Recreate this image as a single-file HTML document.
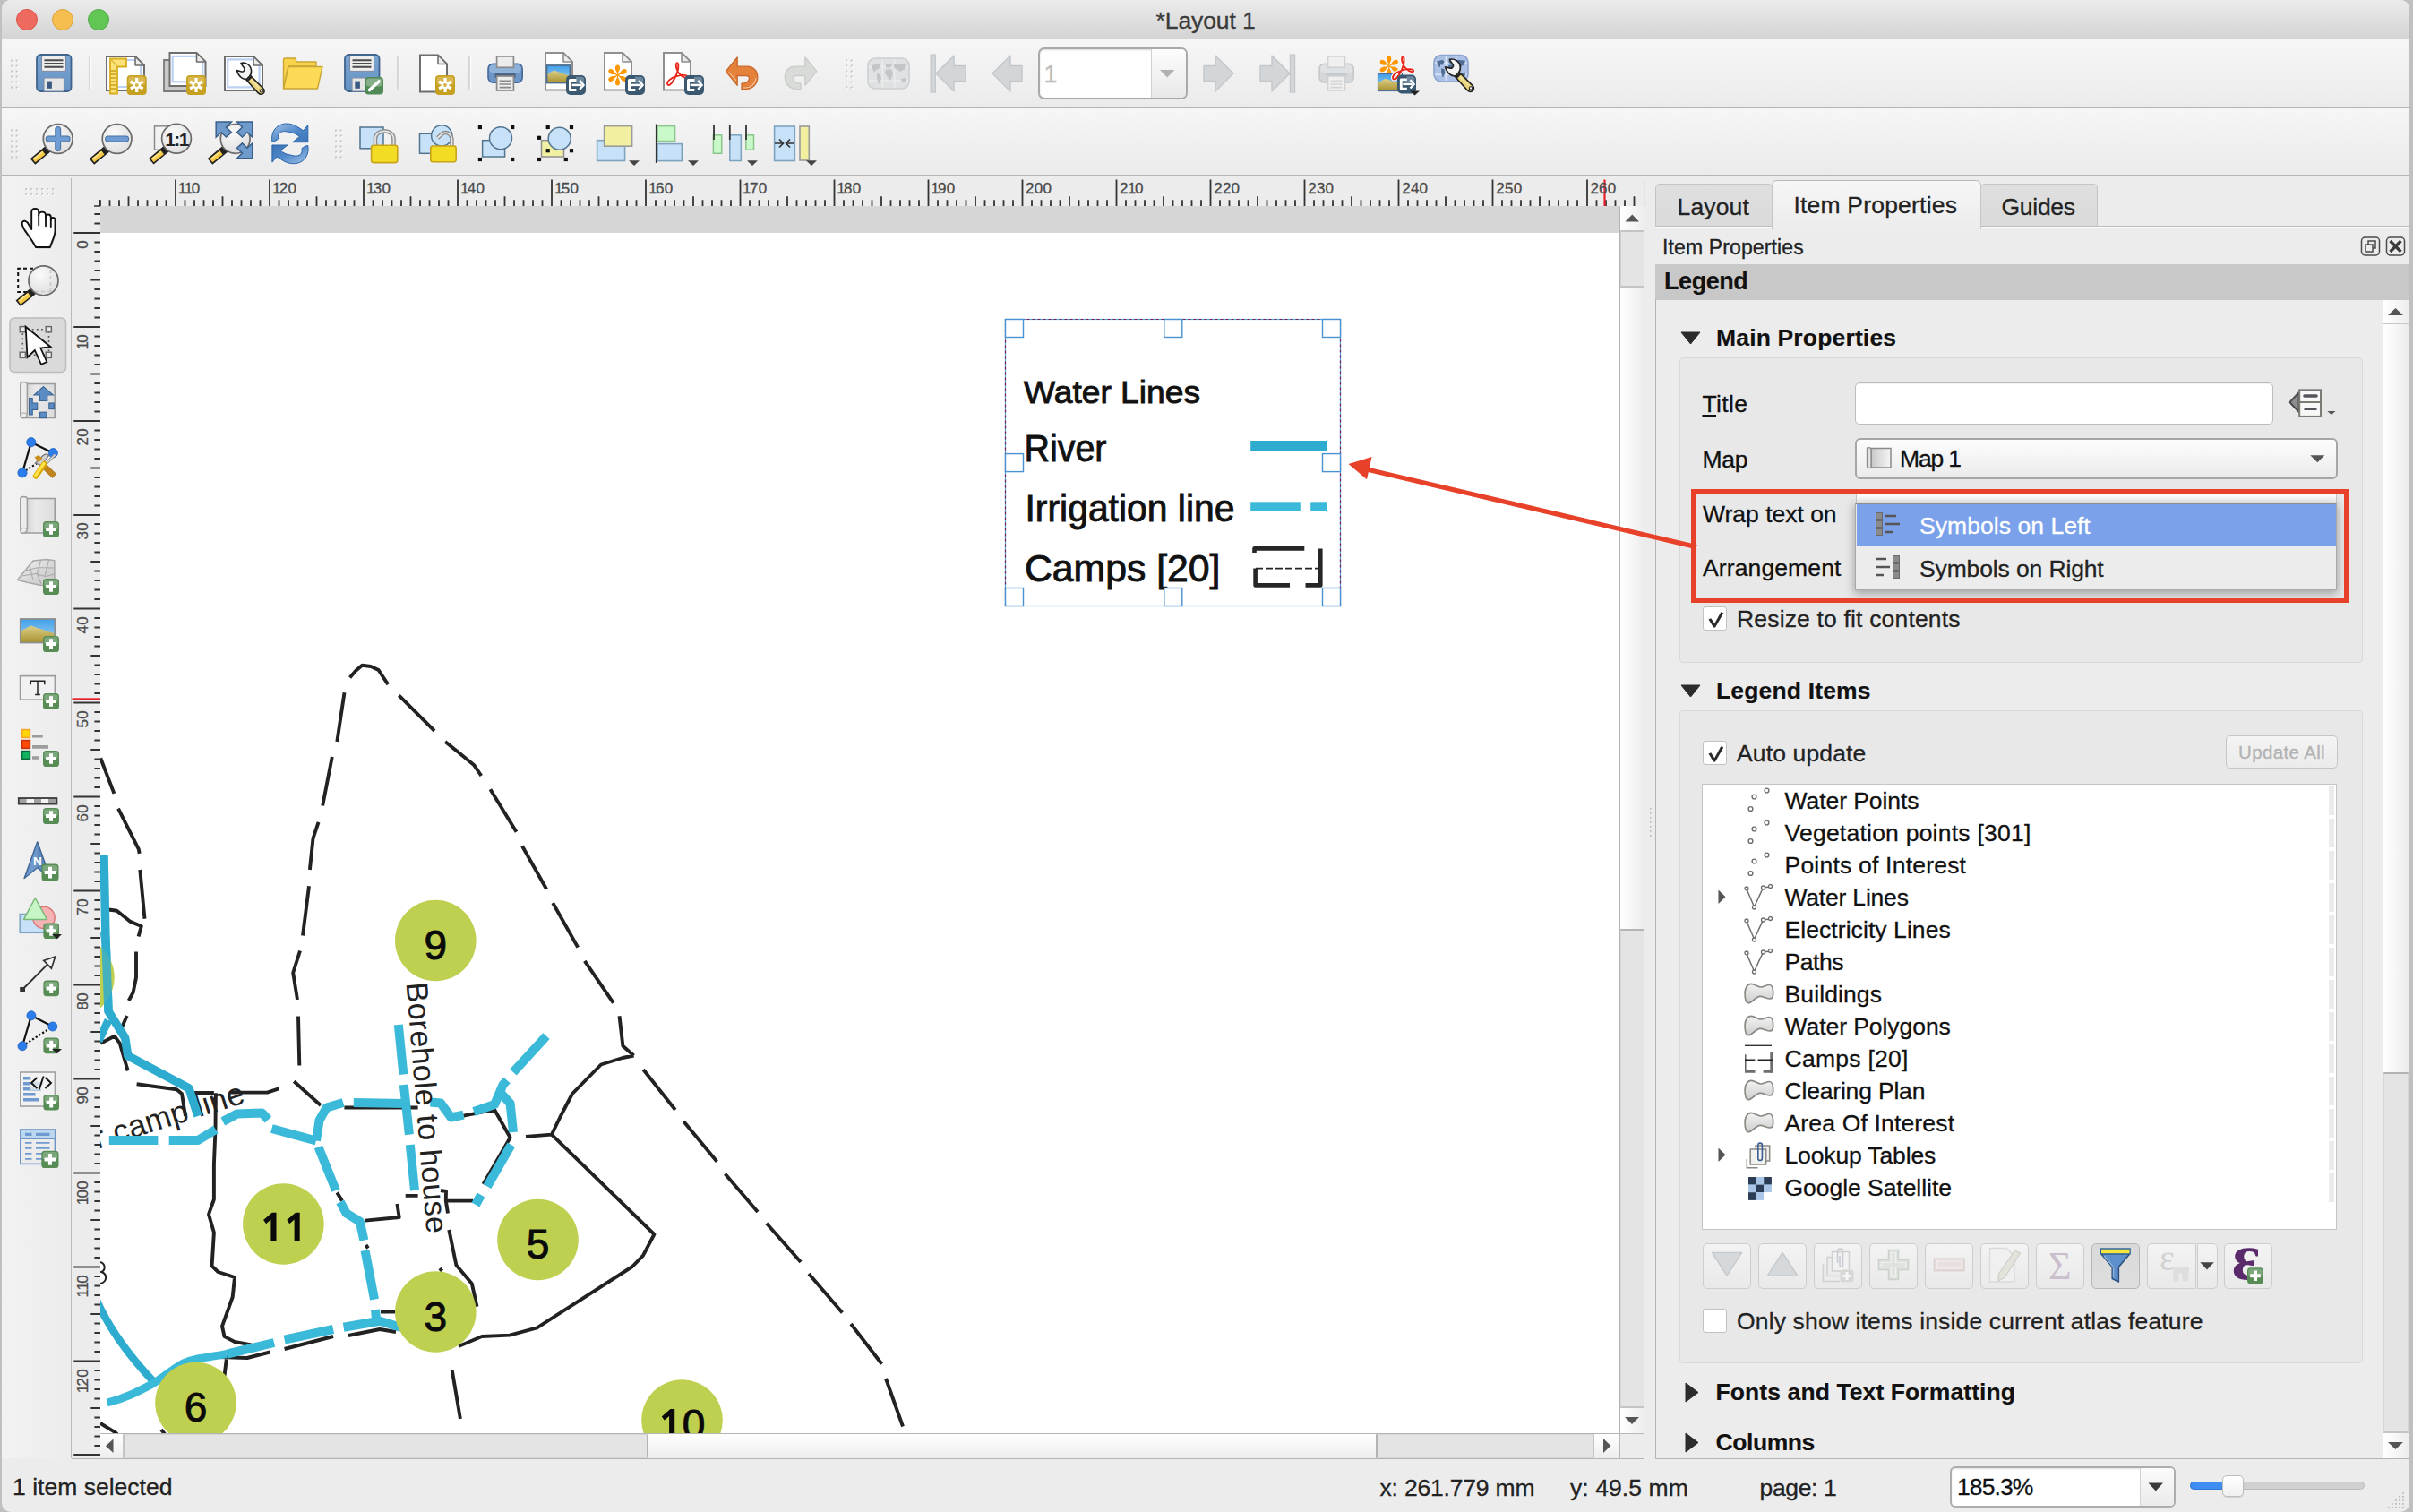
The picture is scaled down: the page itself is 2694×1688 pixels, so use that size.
<!DOCTYPE html><html><head><meta charset="utf-8"><title>*Layout 1</title><style>
*{box-sizing:border-box;margin:0;padding:0}
html,body{width:2694px;height:1688px;overflow:hidden;background:#ececec}
body{font-family:"Liberation Sans",sans-serif;font-size:26.5px;color:#1c1c1c;position:relative}
.a{position:absolute}
.t{position:absolute;white-space:nowrap;line-height:1}
.t{-webkit-text-stroke:0.3px currentColor}
.b{font-weight:bold;-webkit-text-stroke:0.15px currentColor}
svg{position:absolute;overflow:visible}
</style></head><body>
<div class="a" style="left:0px;top:0px;width:2694px;height:1688px;background:#c0c0c0"></div>
<div class="a" style="left:2px;top:0px;width:2688px;height:1688px;background:#ececec;border-radius:10px;overflow:hidden"></div>
<div class="a" style="left:2px;top:0px;width:2688px;height:44px;background:linear-gradient(#ebebeb,#d4d4d4);border-radius:10px 10px 0 0;border-bottom:1px solid #b9b9b9"></div>
<div class="a" style="left:18px;top:10px;width:24px;height:24px;border-radius:50%;background:#ee6a5f;border:1px solid #d95147"></div>
<div class="a" style="left:58px;top:10px;width:24px;height:24px;border-radius:50%;background:#f5be4f;border:1px solid #d9a33d"></div>
<div class="a" style="left:98px;top:10px;width:24px;height:24px;border-radius:50%;background:#62c655;border:1px solid #4fa943"></div>
<div class="t " style="left:1290.5px;top:9.5px;font-size:26.5px;letter-spacing:-0.087px;color:#3a3a3a">*Layout 1</div>
<div class="a" style="left:2px;top:44px;width:2688px;height:77px;background:linear-gradient(#f6f6f6,#ebebeb);border-bottom:2px solid #b4b4b4"></div>
<div class="a" style="left:2px;top:121px;width:2688px;height:76px;background:linear-gradient(#f6f6f6,#ebebeb);border-bottom:2px solid #b4b4b4"></div>
<svg style="left:0;top:0" width="2694" height="200" viewBox="0 0 2694 200">
<rect x="12.0" y="66.5" width="2.2" height="2.2" fill="#c9c9c9"/><rect x="13.6" y="68.1" width="1.4" height="1.4" fill="#fff"/><rect x="17.6" y="66.5" width="2.2" height="2.2" fill="#c9c9c9"/><rect x="19.2" y="68.1" width="1.4" height="1.4" fill="#fff"/><rect x="12.0" y="72.5" width="2.2" height="2.2" fill="#c9c9c9"/><rect x="13.6" y="74.1" width="1.4" height="1.4" fill="#fff"/><rect x="17.6" y="72.5" width="2.2" height="2.2" fill="#c9c9c9"/><rect x="19.2" y="74.1" width="1.4" height="1.4" fill="#fff"/><rect x="12.0" y="78.5" width="2.2" height="2.2" fill="#c9c9c9"/><rect x="13.6" y="80.1" width="1.4" height="1.4" fill="#fff"/><rect x="17.6" y="78.5" width="2.2" height="2.2" fill="#c9c9c9"/><rect x="19.2" y="80.1" width="1.4" height="1.4" fill="#fff"/><rect x="12.0" y="84.5" width="2.2" height="2.2" fill="#c9c9c9"/><rect x="13.6" y="86.1" width="1.4" height="1.4" fill="#fff"/><rect x="17.6" y="84.5" width="2.2" height="2.2" fill="#c9c9c9"/><rect x="19.2" y="86.1" width="1.4" height="1.4" fill="#fff"/><rect x="12.0" y="90.5" width="2.2" height="2.2" fill="#c9c9c9"/><rect x="13.6" y="92.1" width="1.4" height="1.4" fill="#fff"/><rect x="17.6" y="90.5" width="2.2" height="2.2" fill="#c9c9c9"/><rect x="19.2" y="92.1" width="1.4" height="1.4" fill="#fff"/><rect x="12.0" y="96.5" width="2.2" height="2.2" fill="#c9c9c9"/><rect x="13.6" y="98.1" width="1.4" height="1.4" fill="#fff"/><rect x="17.6" y="96.5" width="2.2" height="2.2" fill="#c9c9c9"/><rect x="19.2" y="98.1" width="1.4" height="1.4" fill="#fff"/>
<g transform="translate(40,60)" ><defs><linearGradient id="flp" x1="0" y1="0" x2="0" y2="1"><stop offset="0" stop-color="#7ba5d2"/><stop offset="1" stop-color="#6592c2"/></linearGradient></defs><rect x="1" y="1" width="38.5" height="41" rx="4.5" fill="url(#flp)" stroke="#3f638d" stroke-width="1.8"/><rect x="6.5" y="2.4" width="27" height="17" rx="1.5" fill="#ececec" stroke="#7a8aa0" stroke-width="1"/><path d="M9.5 7.2H30.5M9.5 11H30.5M9.5 14.8H30.5" stroke="#4a4a4a" stroke-width="1.9"/><rect x="9" y="27" width="22.5" height="15" rx="1" fill="#e6e6e6" stroke="#7d8ea6" stroke-width="1.2"/><rect x="12.3" y="30.6" width="5.6" height="8.2" fill="#3a5a82"/></g>
<path d="M100 62.5V101" stroke="#cfcfcf" stroke-width="1.6"/><path d="M101.6 62.5V101" stroke="#fbfbfb" stroke-width="1.4"/>
<g transform="translate(118,62)" ><path d="M1 1H33L43 11V39H1Z" fill="#fff" stroke="#6e6e6e" stroke-width="2" stroke-linejoin="miter"/><path d="M22 5H36M39.2 9V24M13.9 35H26" fill="none" stroke="#bcd0f4" stroke-width="2.2"/><path d="M33 1V11H43Z" fill="#ececec" stroke="#6e6e6e" stroke-width="1.6" stroke-linejoin="bevel"/><path d="M5 3.5H23V12.5H13V42.5H5Z" fill="#fde27a" stroke="#d9ae1c" stroke-width="1.8"/><path d="M5.5 4L12.5 11.5" stroke="#e0b93a" stroke-width="1.3"/><path d="M5.5 17H11M5.5 21H11M5.5 25H11M5.5 29H11M5.5 33H11M5.5 37H11" stroke="#c99f16" stroke-width="1.7"/></g>
<g transform="translate(141.7,84)" ><rect x="0" y="0" width="22" height="22" rx="4" fill="#c6a11f"/><rect x="1.6" y="1.6" width="18.8" height="9.4" rx="3" fill="#d6b84e"/><path d="M11.00 3.00L11.00 19.00M17.93 7.00L4.07 15.00M17.93 15.00L4.07 7.00" stroke="#fff" stroke-width="3.2" stroke-linecap="butt"/><circle cx="11.0" cy="11.0" r="4.3" fill="#fff"/><circle cx="11.0" cy="11.0" r="2" fill="#d2b347"/></g>
<g transform="translate(182,58)" ><path d="M1 9H8V38H31V44H1Z" fill="#c9c9c9" stroke="#7b7b7b" stroke-width="1.8"/><g transform="translate(6.5,0)" ><path d="M1 1H31L41 11V38H1Z" fill="#fff" stroke="#6e6e6e" stroke-width="2" stroke-linejoin="miter"/><path d="M31 4.8H4.2V33.4H37.8V11" fill="none" stroke="#bcd0f4" stroke-width="2.2"/><path d="M31 1V11H41Z" fill="#ececec" stroke="#6e6e6e" stroke-width="1.6" stroke-linejoin="bevel"/></g></g>
<g transform="translate(208,84)" ><rect x="0" y="0" width="22" height="22" rx="4" fill="#c6a11f"/><rect x="1.6" y="1.6" width="18.8" height="9.4" rx="3" fill="#d6b84e"/><path d="M11.00 3.00L11.00 19.00M17.93 7.00L4.07 15.00M17.93 15.00L4.07 7.00" stroke="#fff" stroke-width="3.2" stroke-linecap="butt"/><circle cx="11.0" cy="11.0" r="4.3" fill="#fff"/><circle cx="11.0" cy="11.0" r="2" fill="#d2b347"/></g>
<g transform="translate(250,62)" ><path d="M1 1H33L43 11V39H1Z" fill="#fff" stroke="#6e6e6e" stroke-width="2" stroke-linejoin="miter"/><path d="M33 4.4H4.2V35.4H39.6V11" fill="none" stroke="#bcd0f4" stroke-width="2.2"/><path d="M33 1V11H43Z" fill="#ececec" stroke="#6e6e6e" stroke-width="1.6" stroke-linejoin="bevel"/></g>
<g transform="translate(262.5,68.9)" ><g transform="scale(0.95)"><path d="M12.6 20.6L17.4 15.8L33 31.4C35 33.4 34.6 36.4 32.6 37.6C30.6 38.8 28.4 38 27 36.6Z" fill="#e8d27a" stroke="#222" stroke-width="1.7" stroke-linejoin="round"/><path d="M28 30.5L18.5 21" stroke="#f4e6a4" stroke-width="1.6"/><path d="M6.8 1.7C12 0.2 18.4 3.6 19 10.4C19.3 13.4 18.2 15.8 16.8 17.2L13.8 20.2C10.6 20.8 4.6 19.4 2 10.2L7.6 11.6C9.2 12 10.7 11 11 9.4C11.3 8 10.4 6.6 9.4 5.8Z" fill="#f3f3f3" stroke="#222" stroke-width="1.7" stroke-linejoin="round"/><path d="M14.4 22.4L19.2 17.6" stroke="#222" stroke-width="2.6"/><circle cx="30.9" cy="34.2" r="1.7" fill="#f6f6f6" stroke="#222" stroke-width="1.1"/></g></g>
<g transform="translate(315,64)" ><path d="M1.5 34.5V2.5C1.5 1.5 2 1 3 1H15L16 5H38V10H7L1.5 34.5Z" fill="#f7d24a" stroke="#c9a536" stroke-width="1.4" stroke-linejoin="round"/><path d="M7 10.5H45L39.5 35H1.5Z" fill="#fcda55" stroke="#c9a536" stroke-width="1.4" stroke-linejoin="round"/></g>
<g transform="translate(384,60)" ><defs><linearGradient id="flp" x1="0" y1="0" x2="0" y2="1"><stop offset="0" stop-color="#7ba5d2"/><stop offset="1" stop-color="#6592c2"/></linearGradient></defs><rect x="1" y="1" width="38.5" height="41" rx="4.5" fill="url(#flp)" stroke="#3f638d" stroke-width="1.8"/><rect x="6.5" y="2.4" width="27" height="17" rx="1.5" fill="#ececec" stroke="#7a8aa0" stroke-width="1"/><path d="M9.5 7.2H30.5M9.5 11H30.5M9.5 14.8H30.5" stroke="#4a4a4a" stroke-width="1.9"/><rect x="9" y="27" width="22.5" height="15" rx="1" fill="#e6e6e6" stroke="#7d8ea6" stroke-width="1.2"/><rect x="12.3" y="30.6" width="5.6" height="8.2" fill="#3a5a82"/></g>
<g transform="translate(407.5,86)" ><rect x="0" y="0" width="20.5" height="19.5" rx="4" fill="#4f8a55"/><rect x="1.4" y="1.4" width="17.7" height="9" rx="3" fill="#8eb392" opacity="0.85"/><path d="M5 14.5L15.5 5" stroke="#fff" stroke-width="3.6" stroke-linecap="round"/></g>
<path d="M444 62.5V101" stroke="#cfcfcf" stroke-width="1.6"/><path d="M445.6 62.5V101" stroke="#fbfbfb" stroke-width="1.4"/>
<g transform="translate(468,60.5)" ><path d="M1 1H21L31 11V42H1Z" fill="#fff" stroke="#6e6e6e" stroke-width="2" stroke-linejoin="miter"/><path d="M21 1V11H31Z" fill="#ececec" stroke="#6e6e6e" stroke-width="1.6" stroke-linejoin="bevel"/></g>
<g transform="translate(486,84)" ><rect x="0" y="0" width="22" height="22" rx="4" fill="#c6a11f"/><rect x="1.6" y="1.6" width="18.8" height="9.4" rx="3" fill="#d6b84e"/><path d="M11.00 3.00L11.00 19.00M17.93 7.00L4.07 15.00M17.93 15.00L4.07 7.00" stroke="#fff" stroke-width="3.2" stroke-linecap="butt"/><circle cx="11.0" cy="11.0" r="4.3" fill="#fff"/><circle cx="11.0" cy="11.0" r="2" fill="#d2b347"/></g>
<path d="M524 62.5V101" stroke="#cfcfcf" stroke-width="1.6"/><path d="M525.6 62.5V101" stroke="#fbfbfb" stroke-width="1.4"/>
<g transform="translate(544,62)" ><rect x="1" y="9.3" width="38.2" height="20.8" rx="5.5" fill="#6c95c8" stroke="#466a98" stroke-width="1.6"/><rect x="2.4" y="10.6" width="35.4" height="8.6" rx="4" fill="#90b1d9"/><rect x="10.6" y="0.9" width="18.8" height="12.4" fill="#ececec" stroke="#8a8a8a" stroke-width="1.7"/><rect x="8.6" y="20.2" width="22.8" height="4.6" fill="#4a5f7e"/><rect x="10.6" y="23" width="18.8" height="16" fill="#ececec" stroke="#8a8a8a" stroke-width="1.7"/><path d="M13.6 28.3H26.4M13.6 32H26.4M13.6 35.7H26.4" stroke="#8a8a8a" stroke-width="1.7"/></g>
<g transform="translate(608,58)" ><path d="M1 1H21L31 11V42.5H1Z" fill="#fff" stroke="#8f8f8f" stroke-width="2" stroke-linejoin="miter"/><path d="M21 1V11H31Z" fill="#ececec" stroke="#8f8f8f" stroke-width="1.6" stroke-linejoin="bevel"/><g transform="translate(2.5,15)" ><defs><linearGradient id="sky" x1="0" y1="0" x2="0" y2="1"><stop offset="0" stop-color="#3f9fe8"/><stop offset="1" stop-color="#a9d6f5"/></linearGradient><linearGradient id="snd" x1="0" y1="0" x2="0" y2="1"><stop offset="0" stop-color="#ddd08a"/><stop offset="1" stop-color="#a8922e"/></linearGradient></defs><rect x="0" y="0" width="26" height="19.5" fill="url(#sky)"/><path d="M0 10.14L7.8 5.460000000000001L26 12.09V19.5H0Z" fill="url(#snd)"/></g><rect x="2.5" y="15" width="26" height="19.5" fill="none" stroke="#4f6f90" stroke-width="1.8"/></g>
<g transform="translate(632,84)" ><g transform="scale(1.0)"><rect x="0" y="0" width="22" height="22" rx="5" fill="#3a5870"/><path d="M11 1.8H17.2C19 1.8 20.2 3 20.2 4.8V8.6H11Z" fill="#7a94a8" opacity="0.8"/><path d="M11.4 5.6H4.5V16.5H11.4" fill="none" stroke="#fff" stroke-width="3" stroke-linejoin="round"/><path d="M6.6 10.9H17.4" stroke="#fff" stroke-width="2.5"/><path d="M15.2 5.9L19.6 10.9L15.2 15.8" fill="none" stroke="#fff" stroke-width="2.4"/></g></g>
<g transform="translate(674,58)" ><path d="M1 1H21L31 11V42.5H1Z" fill="#fff" stroke="#8f8f8f" stroke-width="2" stroke-linejoin="miter"/><path d="M21 1V11H31Z" fill="#ececec" stroke="#8f8f8f" stroke-width="1.6" stroke-linejoin="bevel"/><path transform="translate(15.5,26) rotate(0)" d="M0 1.8L-0.87 -3.48C-3.38 -6.76 -3.09 -11.50 0 -11.50C3.09 -11.50 3.38 -6.76 0.87 -3.48Z" fill="#ff9700"/><path transform="translate(15.5,26) rotate(60)" d="M0 1.8L-0.87 -3.48C-3.38 -6.76 -3.09 -11.50 0 -11.50C3.09 -11.50 3.38 -6.76 0.87 -3.48Z" fill="#ff9700"/><path transform="translate(15.5,26) rotate(120)" d="M0 1.8L-0.87 -3.48C-3.38 -6.76 -3.09 -11.50 0 -11.50C3.09 -11.50 3.38 -6.76 0.87 -3.48Z" fill="#ff9700"/><path transform="translate(15.5,26) rotate(180)" d="M0 1.8L-0.87 -3.48C-3.38 -6.76 -3.09 -11.50 0 -11.50C3.09 -11.50 3.38 -6.76 0.87 -3.48Z" fill="#ff9700"/><path transform="translate(15.5,26) rotate(240)" d="M0 1.8L-0.87 -3.48C-3.38 -6.76 -3.09 -11.50 0 -11.50C3.09 -11.50 3.38 -6.76 0.87 -3.48Z" fill="#ff9700"/><path transform="translate(15.5,26) rotate(300)" d="M0 1.8L-0.87 -3.48C-3.38 -6.76 -3.09 -11.50 0 -11.50C3.09 -11.50 3.38 -6.76 0.87 -3.48Z" fill="#ff9700"/></g>
<g transform="translate(698,84)" ><g transform="scale(1.0)"><rect x="0" y="0" width="22" height="22" rx="5" fill="#3a5870"/><path d="M11 1.8H17.2C19 1.8 20.2 3 20.2 4.8V8.6H11Z" fill="#7a94a8" opacity="0.8"/><path d="M11.4 5.6H4.5V16.5H11.4" fill="none" stroke="#fff" stroke-width="3" stroke-linejoin="round"/><path d="M6.6 10.9H17.4" stroke="#fff" stroke-width="2.5"/><path d="M15.2 5.9L19.6 10.9L15.2 15.8" fill="none" stroke="#fff" stroke-width="2.4"/></g></g>
<g transform="translate(740,58)" ><path d="M1 1H21L31 11V42.5H1Z" fill="#fff" stroke="#8f8f8f" stroke-width="2" stroke-linejoin="miter"/><path d="M21 1V11H31Z" fill="#ececec" stroke="#8f8f8f" stroke-width="1.6" stroke-linejoin="bevel"/></g>
<g transform="translate(742.5,67.5) scale(1.0)"><path d="M3 27C1 24 6 19.5 13 17.5C19 15.7 24.5 16 25 18.2C25.4 20 21 19.6 17 16C12.5 12 11.5 4.5 13 3C14.6 1.6 15.6 6 14 12C12.5 18 6 30 3 27Z" fill="none" stroke="#e8261a" stroke-width="1.9" stroke-linejoin="round"/></g>
<g transform="translate(764,84)" ><g transform="scale(1.0)"><rect x="0" y="0" width="22" height="22" rx="5" fill="#3a5870"/><path d="M11 1.8H17.2C19 1.8 20.2 3 20.2 4.8V8.6H11Z" fill="#7a94a8" opacity="0.8"/><path d="M11.4 5.6H4.5V16.5H11.4" fill="none" stroke="#fff" stroke-width="3" stroke-linejoin="round"/><path d="M6.6 10.9H17.4" stroke="#fff" stroke-width="2.5"/><path d="M15.2 5.9L19.6 10.9L15.2 15.8" fill="none" stroke="#fff" stroke-width="2.4"/></g></g>
<path d="M810.3 79.6L823.2 64V74.2H834C841 74.2 845.8 79 845.8 86C845.8 94 840 99.6 832 99.6H828V93.1C833 93.1 836.5 90.5 836.5 87.5C836.5 85.5 835 84.5 833 84.5H823.2V95.3Z" fill="#e4813a" stroke="#c9682a" stroke-width="1.3" stroke-linejoin="round"/>
<path d="M813.5 80.5L822 90M829.5 98H832C838.5 98 843.5 93.5 844 87" fill="none" stroke="#f6c49c" stroke-width="1.1"/>
<path transform="translate(1722.1,0) scale(-1,1)" d="M810.3 79.6L823.2 64V74.2H834C841 74.2 845.8 79 845.8 86C845.8 94 840 99.6 832 99.6H828V93.1C833 93.1 836.5 90.5 836.5 87.5C836.5 85.5 835 84.5 833 84.5H823.2V95.3Z" fill="#d8dbd8" stroke="#c9ccc9" stroke-width="1.3" stroke-linejoin="round"/>
<rect x="944.0" y="66.5" width="2.2" height="2.2" fill="#c9c9c9"/><rect x="945.6" y="68.1" width="1.4" height="1.4" fill="#fff"/><rect x="949.6" y="66.5" width="2.2" height="2.2" fill="#c9c9c9"/><rect x="951.2" y="68.1" width="1.4" height="1.4" fill="#fff"/><rect x="944.0" y="72.5" width="2.2" height="2.2" fill="#c9c9c9"/><rect x="945.6" y="74.1" width="1.4" height="1.4" fill="#fff"/><rect x="949.6" y="72.5" width="2.2" height="2.2" fill="#c9c9c9"/><rect x="951.2" y="74.1" width="1.4" height="1.4" fill="#fff"/><rect x="944.0" y="78.5" width="2.2" height="2.2" fill="#c9c9c9"/><rect x="945.6" y="80.1" width="1.4" height="1.4" fill="#fff"/><rect x="949.6" y="78.5" width="2.2" height="2.2" fill="#c9c9c9"/><rect x="951.2" y="80.1" width="1.4" height="1.4" fill="#fff"/><rect x="944.0" y="84.5" width="2.2" height="2.2" fill="#c9c9c9"/><rect x="945.6" y="86.1" width="1.4" height="1.4" fill="#fff"/><rect x="949.6" y="84.5" width="2.2" height="2.2" fill="#c9c9c9"/><rect x="951.2" y="86.1" width="1.4" height="1.4" fill="#fff"/><rect x="944.0" y="90.5" width="2.2" height="2.2" fill="#c9c9c9"/><rect x="945.6" y="92.1" width="1.4" height="1.4" fill="#fff"/><rect x="949.6" y="90.5" width="2.2" height="2.2" fill="#c9c9c9"/><rect x="951.2" y="92.1" width="1.4" height="1.4" fill="#fff"/><rect x="944.0" y="96.5" width="2.2" height="2.2" fill="#c9c9c9"/><rect x="945.6" y="98.1" width="1.4" height="1.4" fill="#fff"/><rect x="949.6" y="96.5" width="2.2" height="2.2" fill="#c9c9c9"/><rect x="951.2" y="98.1" width="1.4" height="1.4" fill="#fff"/>
<g transform="translate(968,64)" ><rect x="1" y="1" width="46" height="34" rx="8" fill="#dfe1e3" stroke="#cdd0d2" stroke-width="1.6"/><path d="M17.28 2V34M30.72 2V34M2 10.799999999999999H46M2 25.919999999999998H46" stroke="#ececec" stroke-width="1.5"/><g fill="#c3c6c9" transform="scale(1.000,1.000)"><path d="M5 9L13 7L15 10L12 14L10 13L9 17L6 13Z"/><path d="M11 18L15 19L16 24L13 30L11 24Z"/><path d="M21 8L27 7L28 10L24 12L21 11Z"/><path d="M21 14L27 13L29 18L26 26L23 22L20 17Z"/><path d="M30 7L43 8L42 13L37 16L33 13L30 12Z"/><path d="M38 24L43 23L43 27L39 28Z"/></g></g>
<g transform="translate(1038.5,61)" ><rect x="0.6" y="0" width="5.2" height="42" fill="#d3d6d9" stroke="#c4c7ca" stroke-width="1.2"/><g transform="translate(5.6,0)" ><path d="M1 21L21 1V12.5H34V29.5H21V41Z" fill="#d3d6d9" stroke="#c4c7ca" stroke-width="1.4" stroke-linejoin="round"/></g></g>
<g transform="translate(1107,61)" ><path d="M1 21L21 1V12.5H34V29.5H21V41Z" fill="#d3d6d9" stroke="#c4c7ca" stroke-width="1.4" stroke-linejoin="round"/></g>
<g transform="translate(1343,61)" ><path d="M34 21L14 1V12.5H1V29.5H14V41Z" fill="#d3d6d9" stroke="#c4c7ca" stroke-width="1.4" stroke-linejoin="round"/></g>
<g transform="translate(1406,61)" ><path d="M34 21L14 1V12.5H1V29.5H14V41Z" fill="#d3d6d9" stroke="#c4c7ca" stroke-width="1.4" stroke-linejoin="round"/><rect x="34.4" y="0" width="5.2" height="42" fill="#d3d6d9" stroke="#c4c7ca" stroke-width="1.2"/></g>
<g transform="translate(1472,62)" ><rect x="1" y="9.3" width="38.2" height="20.8" rx="5.5" fill="#d5d8db" stroke="#c6c9cc" stroke-width="1.6"/><rect x="2.4" y="10.6" width="35.4" height="8.6" rx="4" fill="#dfe2e5"/><rect x="10.6" y="0.9" width="18.8" height="12.4" fill="#f0f0f0" stroke="#d2d2d2" stroke-width="1.7"/><rect x="8.6" y="20.2" width="22.8" height="4.6" fill="#c4c7ca"/><rect x="10.6" y="23" width="18.8" height="16" fill="#f0f0f0" stroke="#d2d2d2" stroke-width="1.7"/><path d="M13.6 28.3H26.4M13.6 32H26.4M13.6 35.7H26.4" stroke="#d4d4d4" stroke-width="1.7"/></g>
<path transform="translate(1550.8,73.6) rotate(0)" d="M0 1.8L-0.86 -3.45C-3.35 -6.71 -3.07 -11.40 0 -11.40C3.07 -11.40 3.35 -6.71 0.86 -3.45Z" fill="#ff9700"/><path transform="translate(1550.8,73.6) rotate(60)" d="M0 1.8L-0.86 -3.45C-3.35 -6.71 -3.07 -11.40 0 -11.40C3.07 -11.40 3.35 -6.71 0.86 -3.45Z" fill="#ff9700"/><path transform="translate(1550.8,73.6) rotate(120)" d="M0 1.8L-0.86 -3.45C-3.35 -6.71 -3.07 -11.40 0 -11.40C3.07 -11.40 3.35 -6.71 0.86 -3.45Z" fill="#ff9700"/><path transform="translate(1550.8,73.6) rotate(180)" d="M0 1.8L-0.86 -3.45C-3.35 -6.71 -3.07 -11.40 0 -11.40C3.07 -11.40 3.35 -6.71 0.86 -3.45Z" fill="#ff9700"/><path transform="translate(1550.8,73.6) rotate(240)" d="M0 1.8L-0.86 -3.45C-3.35 -6.71 -3.07 -11.40 0 -11.40C3.07 -11.40 3.35 -6.71 0.86 -3.45Z" fill="#ff9700"/><path transform="translate(1550.8,73.6) rotate(300)" d="M0 1.8L-0.86 -3.45C-3.35 -6.71 -3.07 -11.40 0 -11.40C3.07 -11.40 3.35 -6.71 0.86 -3.45Z" fill="#ff9700"/>
<g transform="translate(1538.5,82.5)" ><defs><linearGradient id="sky" x1="0" y1="0" x2="0" y2="1"><stop offset="0" stop-color="#3f9fe8"/><stop offset="1" stop-color="#a9d6f5"/></linearGradient><linearGradient id="snd" x1="0" y1="0" x2="0" y2="1"><stop offset="0" stop-color="#ddd08a"/><stop offset="1" stop-color="#a8922e"/></linearGradient></defs><rect x="0" y="0" width="27" height="19" fill="url(#sky)"/><path d="M0 9.88L8.1 5.32L27 11.78V19H0Z" fill="url(#snd)"/><rect x="0" y="0" width="27" height="19" fill="none" stroke="#4f6f96" stroke-width="1.2"/></g>
<g transform="translate(1552.4,60.3) scale(1.03)"><path d="M3 27C1 24 6 19.5 13 17.5C19 15.7 24.5 16 25 18.2C25.4 20 21 19.6 17 16C12.5 12 11.5 4.5 13 3C14.6 1.6 15.6 6 14 12C12.5 18 6 30 3 27Z" fill="none" stroke="#ffffff" stroke-width="4" stroke-linejoin="round"/></g>
<g transform="translate(1552.4,60.3) scale(1.03)"><path d="M3 27C1 24 6 19.5 13 17.5C19 15.7 24.5 16 25 18.2C25.4 20 21 19.6 17 16C12.5 12 11.5 4.5 13 3C14.6 1.6 15.6 6 14 12C12.5 18 6 30 3 27Z" fill="none" stroke="#e8261a" stroke-width="1.9" stroke-linejoin="round"/></g>
<g transform="translate(1560,83.5)" ><g transform="scale(0.9545454545454546)"><rect x="0" y="0" width="22" height="22" rx="5" fill="#3a5870"/><path d="M11 1.8H17.2C19 1.8 20.2 3 20.2 4.8V8.6H11Z" fill="#7a94a8" opacity="0.8"/><path d="M11.4 5.6H4.5V16.5H11.4" fill="none" stroke="#fff" stroke-width="3" stroke-linejoin="round"/><path d="M6.6 10.9H17.4" stroke="#fff" stroke-width="2.5"/><path d="M15.2 5.9L19.6 10.9L15.2 15.8" fill="none" stroke="#fff" stroke-width="2.4"/></g></g>
<path d="M1574 101.5H1585L1579.5 106.5Z" fill="#222"/>
<g transform="translate(1600,60.5)" ><rect x="1" y="1" width="38" height="29.5" rx="8" fill="#abc2e6" stroke="#8aa4cf" stroke-width="1.6"/><path d="M14.399999999999999 2V29.5M25.6 2V29.5M2 9.45H38M2 22.68H38" stroke="#dbe5f6" stroke-width="1.5"/><g fill="#4f6d92" transform="scale(0.833,0.875)"><path d="M5 9L13 7L15 10L12 14L10 13L9 17L6 13Z"/><path d="M11 18L15 19L16 24L13 30L11 24Z"/><path d="M21 8L27 7L28 10L24 12L21 11Z"/><path d="M21 14L27 13L29 18L26 26L23 22L20 17Z"/><path d="M30 7L43 8L42 13L37 16L33 13L30 12Z"/><path d="M38 24L43 23L43 27L39 28Z"/></g></g>
<g transform="translate(1611.6,64.7)" ><g transform="scale(0.985)"><path d="M12.6 20.6L17.4 15.8L33 31.4C35 33.4 34.6 36.4 32.6 37.6C30.6 38.8 28.4 38 27 36.6Z" fill="#e8d27a" stroke="#222" stroke-width="1.7" stroke-linejoin="round"/><path d="M28 30.5L18.5 21" stroke="#f4e6a4" stroke-width="1.6"/><path d="M6.8 1.7C12 0.2 18.4 3.6 19 10.4C19.3 13.4 18.2 15.8 16.8 17.2L13.8 20.2C10.6 20.8 4.6 19.4 2 10.2L7.6 11.6C9.2 12 10.7 11 11 9.4C11.3 8 10.4 6.6 9.4 5.8Z" fill="#f3f3f3" stroke="#222" stroke-width="1.7" stroke-linejoin="round"/><path d="M14.4 22.4L19.2 17.6" stroke="#222" stroke-width="2.6"/><circle cx="30.9" cy="34.2" r="1.7" fill="#f6f6f6" stroke="#222" stroke-width="1.1"/></g></g>
<rect x="12.0" y="144.5" width="2.2" height="2.2" fill="#c9c9c9"/><rect x="13.6" y="146.1" width="1.4" height="1.4" fill="#fff"/><rect x="17.6" y="144.5" width="2.2" height="2.2" fill="#c9c9c9"/><rect x="19.2" y="146.1" width="1.4" height="1.4" fill="#fff"/><rect x="12.0" y="150.5" width="2.2" height="2.2" fill="#c9c9c9"/><rect x="13.6" y="152.1" width="1.4" height="1.4" fill="#fff"/><rect x="17.6" y="150.5" width="2.2" height="2.2" fill="#c9c9c9"/><rect x="19.2" y="152.1" width="1.4" height="1.4" fill="#fff"/><rect x="12.0" y="156.5" width="2.2" height="2.2" fill="#c9c9c9"/><rect x="13.6" y="158.1" width="1.4" height="1.4" fill="#fff"/><rect x="17.6" y="156.5" width="2.2" height="2.2" fill="#c9c9c9"/><rect x="19.2" y="158.1" width="1.4" height="1.4" fill="#fff"/><rect x="12.0" y="162.5" width="2.2" height="2.2" fill="#c9c9c9"/><rect x="13.6" y="164.1" width="1.4" height="1.4" fill="#fff"/><rect x="17.6" y="162.5" width="2.2" height="2.2" fill="#c9c9c9"/><rect x="19.2" y="164.1" width="1.4" height="1.4" fill="#fff"/><rect x="12.0" y="168.5" width="2.2" height="2.2" fill="#c9c9c9"/><rect x="13.6" y="170.1" width="1.4" height="1.4" fill="#fff"/><rect x="17.6" y="168.5" width="2.2" height="2.2" fill="#c9c9c9"/><rect x="19.2" y="170.1" width="1.4" height="1.4" fill="#fff"/><rect x="12.0" y="174.5" width="2.2" height="2.2" fill="#c9c9c9"/><rect x="13.6" y="176.1" width="1.4" height="1.4" fill="#fff"/><rect x="17.6" y="174.5" width="2.2" height="2.2" fill="#c9c9c9"/><rect x="19.2" y="176.1" width="1.4" height="1.4" fill="#fff"/>
<path d="M54.5 165.5L36.5 180.5" stroke="#222" stroke-width="8.6" stroke-linecap="butt"/><path d="M49.0 170.5L37.7 179.3" stroke="#f6c945" stroke-width="5.2" stroke-linecap="butt"/><path d="M47.5 169.7L38.1 177.2" stroke="#fbe58c" stroke-width="1.6"/><defs><radialGradient id="lens64" cx="0.4" cy="0.3" r="0.8"><stop offset="0" stop-color="#fafafa"/><stop offset="1" stop-color="#dcdcdc"/></radialGradient></defs><circle cx="64.7" cy="155" r="16.4" fill="url(#lens64)" stroke="#6b6b6b" stroke-width="1.7"/><path d="M54.2 155H75.2M64.7 144.5V165.5" stroke="#49709f" stroke-width="7" stroke-linecap="round"/><path d="M54.2 155H75.2M64.7 144.5V165.5" stroke="#6e9cd3" stroke-width="5" stroke-linecap="round"/>
<path d="M120.4 165.5L102.4 180.5" stroke="#222" stroke-width="8.6" stroke-linecap="butt"/><path d="M114.9 170.5L103.6 179.3" stroke="#f6c945" stroke-width="5.2" stroke-linecap="butt"/><path d="M113.4 169.7L104.0 177.2" stroke="#fbe58c" stroke-width="1.6"/><defs><radialGradient id="lens130" cx="0.4" cy="0.3" r="0.8"><stop offset="0" stop-color="#fafafa"/><stop offset="1" stop-color="#dcdcdc"/></radialGradient></defs><circle cx="130.6" cy="155" r="16.4" fill="url(#lens130)" stroke="#6b6b6b" stroke-width="1.7"/><path d="M120.6 155H140.6" stroke="#49709f" stroke-width="7" stroke-linecap="round"/><path d="M120.6 155H140.6" stroke="#6e9cd3" stroke-width="5" stroke-linecap="round"/>
<rect x="172.5" y="140.8" width="27" height="26.5" fill="#f2f2f2" stroke="#8a8a8a" stroke-width="1.5"/>
<path d="M186.8 165.3L168.8 180.3" stroke="#222" stroke-width="8.6" stroke-linecap="butt"/><path d="M181.3 170.3L170.0 179.1" stroke="#f6c945" stroke-width="5.2" stroke-linecap="butt"/><path d="M179.8 169.5L170.4 177.0" stroke="#fbe58c" stroke-width="1.6"/><defs><radialGradient id="lens197" cx="0.4" cy="0.3" r="0.8"><stop offset="0" stop-color="#fafafa"/><stop offset="1" stop-color="#dcdcdc"/></radialGradient></defs><circle cx="197" cy="154.8" r="16.4" fill="url(#lens197)" stroke="#6b6b6b" stroke-width="1.7"/><text x="197" y="162.6" text-anchor="middle" font-family="Liberation Sans, sans-serif" font-weight="bold" font-size="21" letter-spacing="-1.6" fill="#222">1:1</text>
<path d="M252.5 165.4L234.5 180.4" stroke="#222" stroke-width="8.6" stroke-linecap="butt"/><path d="M247.0 170.4L235.7 179.2" stroke="#f6c945" stroke-width="5.2" stroke-linecap="butt"/><path d="M245.5 169.6L236.1 177.1" stroke="#fbe58c" stroke-width="1.6"/><defs><radialGradient id="lens262" cx="0.4" cy="0.3" r="0.8"><stop offset="0" stop-color="#fafafa"/><stop offset="1" stop-color="#dcdcdc"/></radialGradient></defs><circle cx="262.7" cy="154.9" r="16.4" fill="url(#lens262)" stroke="#6b6b6b" stroke-width="1.7"/>
<g fill="#6e9bcb" stroke="#3a5f8a" stroke-width="1.5" stroke-linejoin="miter"><path transform="translate(241.2,136.1)" d="M0 0H17.2L11.3 5.9L17.2 11.6L11.3 16.9L5.9 11.6L0 16.9Z"/><path transform="translate(281.8,136.1) scale(-1,1)" d="M0 0H17.2L11.3 5.9L17.2 11.6L11.3 16.9L5.9 11.6L0 16.9Z"/><path transform="translate(281.8,176.8) scale(-1,-1)" d="M0 0H17.2L11.3 5.9L17.2 11.6L11.3 16.9L5.9 11.6L0 16.9Z"/></g>
<defs><linearGradient id="rfg" x1="0" y1="0" x2="1" y2="1"><stop offset="0" stop-color="#a5c4e8"/><stop offset="0.55" stop-color="#4d88c9"/><stop offset="1" stop-color="#3b74b6"/></linearGradient></defs>
<g fill="url(#rfg)" stroke="#2a62a8" stroke-width="1" stroke-linejoin="round"><path d="M303.9 158.2C303.2 153 303.8 149.5 305.8 145.8C308.5 141 313.5 138.2 319.3 138C324.5 137.8 329.5 139.8 332.8 142L338.7 145.8L343.8 139.6V158.7H326.8L334.4 152.5C331.5 150 328 148.3 324.7 147.9C321.5 147.3 319 146.4 316.6 146.6C314.3 146.8 312.3 147.9 311.2 149.6C310.4 151.2 310.5 153.2 310.7 155C308.7 156.8 306.3 157.9 303.9 158.2Z"/><path transform="rotate(180 323.85 160.35)" d="M303.9 158.2C303.2 153 303.8 149.5 305.8 145.8C308.5 141 313.5 138.2 319.3 138C324.5 137.8 329.5 139.8 332.8 142L338.7 145.8L343.8 139.6V158.7H326.8L334.4 152.5C331.5 150 328 148.3 324.7 147.9C321.5 147.3 319 146.4 316.6 146.6C314.3 146.8 312.3 147.9 311.2 149.6C310.4 151.2 310.5 153.2 310.7 155C308.7 156.8 306.3 157.9 303.9 158.2Z"/></g>
<rect x="374.0" y="144.5" width="2.2" height="2.2" fill="#c9c9c9"/><rect x="375.6" y="146.1" width="1.4" height="1.4" fill="#fff"/><rect x="379.6" y="144.5" width="2.2" height="2.2" fill="#c9c9c9"/><rect x="381.2" y="146.1" width="1.4" height="1.4" fill="#fff"/><rect x="374.0" y="150.5" width="2.2" height="2.2" fill="#c9c9c9"/><rect x="375.6" y="152.1" width="1.4" height="1.4" fill="#fff"/><rect x="379.6" y="150.5" width="2.2" height="2.2" fill="#c9c9c9"/><rect x="381.2" y="152.1" width="1.4" height="1.4" fill="#fff"/><rect x="374.0" y="156.5" width="2.2" height="2.2" fill="#c9c9c9"/><rect x="375.6" y="158.1" width="1.4" height="1.4" fill="#fff"/><rect x="379.6" y="156.5" width="2.2" height="2.2" fill="#c9c9c9"/><rect x="381.2" y="158.1" width="1.4" height="1.4" fill="#fff"/><rect x="374.0" y="162.5" width="2.2" height="2.2" fill="#c9c9c9"/><rect x="375.6" y="164.1" width="1.4" height="1.4" fill="#fff"/><rect x="379.6" y="162.5" width="2.2" height="2.2" fill="#c9c9c9"/><rect x="381.2" y="164.1" width="1.4" height="1.4" fill="#fff"/><rect x="374.0" y="168.5" width="2.2" height="2.2" fill="#c9c9c9"/><rect x="375.6" y="170.1" width="1.4" height="1.4" fill="#fff"/><rect x="379.6" y="168.5" width="2.2" height="2.2" fill="#c9c9c9"/><rect x="381.2" y="170.1" width="1.4" height="1.4" fill="#fff"/><rect x="374.0" y="174.5" width="2.2" height="2.2" fill="#c9c9c9"/><rect x="375.6" y="176.1" width="1.4" height="1.4" fill="#fff"/><rect x="379.6" y="174.5" width="2.2" height="2.2" fill="#c9c9c9"/><rect x="381.2" y="176.1" width="1.4" height="1.4" fill="#fff"/>
<rect x="402" y="142" width="26" height="23.8" fill="#c7e2f8" stroke="#52748f" stroke-width="1.5"/>
<path d="M419 164V155C419 143.5 439.5 143.5 439.5 155V164" fill="none" stroke="#8d8d8d" stroke-width="4.6"/><path d="M419 164V155C419 143.5 439.5 143.5 439.5 155V164" fill="none" stroke="#e4e4e4" stroke-width="1.8"/>
<rect x="414.6" y="162.2" width="29.2" height="19.4" rx="2.5" fill="#f2dc24" stroke="#c9a41a" stroke-width="1.6"/>
<rect x="468.5" y="149.3" width="26.3" height="22" fill="#c7e2f8" stroke="#52748f" stroke-width="1.5"/><circle cx="493.2" cy="151.4" r="11.6" fill="#c7e2f8" stroke="#52748f" stroke-width="1.5"/>
<path d="M488.5 154L494 149C500 146 505 151 504.5 157.5V163" fill="none" stroke="#8d8d8d" stroke-width="4.4"/><path d="M488.5 154L494 149C500 146 505 151 504.5 157.5V163" fill="none" stroke="#e8e8e8" stroke-width="1.7"/>
<rect x="480.8" y="163" width="28.4" height="17.8" rx="2.5" fill="#f2dc24" stroke="#c9a41a" stroke-width="1.6"/>
<rect x="538.6" y="156.7" width="25" height="18.3" fill="#c7e2f8" stroke="#52748f" stroke-width="1.5"/><circle cx="559" cy="154.2" r="12.5" fill="#c7e2f8" stroke="#52748f" stroke-width="1.5"/>
<rect x="533.8" y="139.9" width="4.2" height="4.2" fill="#111"/><rect x="570.1" y="139.9" width="4.2" height="4.2" fill="#111"/><rect x="533.8" y="175.9" width="4.2" height="4.2" fill="#111"/><rect x="570.1" y="175.9" width="4.2" height="4.2" fill="#111"/>
<rect x="604.5" y="156.7" width="25" height="18.3" fill="#f1f0a2" stroke="#909090" stroke-width="1.5"/><circle cx="624.7" cy="154.7" r="12.5" fill="#c7e2f8" stroke="#52748f" stroke-width="1.5"/>
<rect x="609.6" y="139.9" width="4.2" height="4.2" fill="#111"/><rect x="635.9" y="139.9" width="4.2" height="4.2" fill="#111"/><rect x="599.9" y="151.70000000000002" width="4.2" height="4.2" fill="#111"/><rect x="609.6" y="166.1" width="4.2" height="4.2" fill="#111"/><rect x="635.9" y="166.1" width="4.2" height="4.2" fill="#111"/><rect x="599.9" y="175.9" width="4.2" height="4.2" fill="#111"/><rect x="629.6999999999999" y="175.9" width="4.2" height="4.2" fill="#111"/>
<rect x="666.6" y="156.7" width="31" height="22.8" fill="#c7e2f8" stroke="#7da3bf" stroke-width="1.6"/><rect x="674.6" y="140.6" width="31" height="22.6" fill="#f3efa0" stroke="#9a9a9a" stroke-width="1.6"/>
<path d="M702 179.2H714L708 185Z" fill="#444"/>
<rect x="734" y="140.6" width="19.5" height="17" fill="#c9f9c9" stroke="#8cc58c" stroke-width="1.6"/><rect x="734" y="160.6" width="27.3" height="19" fill="#c7e2f8" stroke="#7da3bf" stroke-width="1.6"/><path d="M732.8 138.5V182" stroke="#333" stroke-width="1.8"/>
<path d="M768 179.2H780L774 185Z" fill="#444"/>
<rect x="796.4" y="150.8" width="9.3" height="20.5" fill="#c9f9c9" stroke="#8cc58c" stroke-width="1.5"/><rect x="814.8" y="150.8" width="12.5" height="28.7" fill="#c7e2f8" stroke="#7da3bf" stroke-width="1.5"/><rect x="832.8" y="150.8" width="8.7" height="16.4" fill="#c9f9c9" stroke="#8cc58c" stroke-width="1.5"/>
<path d="M797 140V156M814.8 140V156M833 140V156" stroke="#333" stroke-width="1.8"/>
<path d="M834 179.2H846L840 185Z" fill="#444"/>
<rect x="864.6" y="141" width="22.7" height="38.5" fill="#c7e2f8" stroke="#7da3bf" stroke-width="1.6"/><rect x="893" y="141" width="10.3" height="38" fill="#f3efa0" stroke="#9a9a9a" stroke-width="1.6"/>
<path d="M865 160H873.5M870 155.5L874.5 160L870 164.5M887 160H878.5M882 155.5L877.5 160L882 164.5" fill="none" stroke="#333" stroke-width="1.7"/>
<path d="M900 179.2H912L906 185Z" fill="#444"/>
</svg>
<div class="a" style="left:1158.5px;top:52.5px;width:167px;height:58.5px;border:2px solid #a9a9a9;border-radius:7px;background:#fff;overflow:hidden;box-shadow:inset 0 1px 2px rgba(0,0,0,0.15)"><div class="a" style="left:124px;top:0;width:43px;height:58px;background:linear-gradient(#fdfdfd,#e6e6e6);border-left:1px solid #d0d0d0"></div></div>
<div class="t" style="left:1165.5px;top:69.5px;font-size:27px;color:#bdbdbd">1</div>
<svg style="left:1295px;top:78px" width="17" height="9"><path d="M0 0H16.5L8.2 8.5Z" fill="#b0b0b0"/></svg>
<div class="a" style="left:2px;top:197px;width:78px;height:1431px;background:linear-gradient(90deg,#f2f2f2,#ececec)"></div>
<svg style="left:0;top:0" width="90" height="1688" viewBox="0 0 90 1688">
<rect x="28.0" y="210.0" width="2.2" height="2.2" fill="#c9c9c9"/><rect x="29.6" y="211.6" width="1.4" height="1.4" fill="#fff"/><rect x="34.0" y="210.0" width="2.2" height="2.2" fill="#c9c9c9"/><rect x="35.6" y="211.6" width="1.4" height="1.4" fill="#fff"/><rect x="40.0" y="210.0" width="2.2" height="2.2" fill="#c9c9c9"/><rect x="41.6" y="211.6" width="1.4" height="1.4" fill="#fff"/><rect x="46.0" y="210.0" width="2.2" height="2.2" fill="#c9c9c9"/><rect x="47.6" y="211.6" width="1.4" height="1.4" fill="#fff"/><rect x="52.0" y="210.0" width="2.2" height="2.2" fill="#c9c9c9"/><rect x="53.6" y="211.6" width="1.4" height="1.4" fill="#fff"/><rect x="58.0" y="210.0" width="2.2" height="2.2" fill="#c9c9c9"/><rect x="59.6" y="211.6" width="1.4" height="1.4" fill="#fff"/><rect x="28.0" y="215.6" width="2.2" height="2.2" fill="#c9c9c9"/><rect x="29.6" y="217.2" width="1.4" height="1.4" fill="#fff"/><rect x="34.0" y="215.6" width="2.2" height="2.2" fill="#c9c9c9"/><rect x="35.6" y="217.2" width="1.4" height="1.4" fill="#fff"/><rect x="40.0" y="215.6" width="2.2" height="2.2" fill="#c9c9c9"/><rect x="41.6" y="217.2" width="1.4" height="1.4" fill="#fff"/><rect x="46.0" y="215.6" width="2.2" height="2.2" fill="#c9c9c9"/><rect x="47.6" y="217.2" width="1.4" height="1.4" fill="#fff"/><rect x="52.0" y="215.6" width="2.2" height="2.2" fill="#c9c9c9"/><rect x="53.6" y="217.2" width="1.4" height="1.4" fill="#fff"/><rect x="58.0" y="215.6" width="2.2" height="2.2" fill="#c9c9c9"/><rect x="59.6" y="217.2" width="1.4" height="1.4" fill="#fff"/>
<path d="M36.3 257.6V238.6C36.3 233.2 44.3 233.2 44.3 238.6V242C44.3 237 52 237 52 242V244.3C52 240 57.8 240 57.8 244.3V247.4C57.8 243.6 62.5 243.6 62.5 247.4V259C62.5 265 59 271 56.8 277.6H41C38 271.5 32 263.5 28.8 259C26 254.5 25 250.5 26.5 249C28 247.5 30.5 248.5 32 250.5Z" fill="#000" opacity="0.22"/><path d="M35.2 256V237C35.2 231.6 43.2 231.6 43.2 237V240.4C43.2 235.4 51 235.4 51 240.4V242.7C51 238.4 56.8 238.4 56.8 242.7V245.8C56.8 242 61.5 242 61.5 245.8V257.4C61.5 263.4 58 269.4 55.8 276H40C37 269.9 31 261.9 27.8 257.4C25 252.9 24 248.9 25.5 247.4C27 245.9 29.5 246.9 31 248.9Z" fill="#fff" stroke="#111" stroke-width="1.9" stroke-linejoin="round"/><path d="M43.2 240V251.5M51 242.5V252.3M56.8 245.5V253" stroke="#111" stroke-width="1.8" stroke-linecap="round"/>
<path d="M37 299.8H20.2V326H34" fill="none" stroke="#111" stroke-width="2" stroke-dasharray="4 3"/>
<path d="M38.3 323.9L20.3 338.8" stroke="#222" stroke-width="8.6" stroke-linecap="butt"/><path d="M32.8 328.9L21.5 337.6" stroke="#f6c945" stroke-width="5.2" stroke-linecap="butt"/><path d="M31.3 328.1L21.9 335.5" stroke="#fbe58c" stroke-width="1.6"/><defs><radialGradient id="lens48" cx="0.4" cy="0.3" r="0.8"><stop offset="0" stop-color="#fafafa"/><stop offset="1" stop-color="#dcdcdc"/></radialGradient></defs><circle cx="48.5" cy="313.3" r="16.5" fill="url(#lens48)" stroke="#6b6b6b" stroke-width="1.7"/><path d="M56.5 301V325M39 325.5H57" fill="none" stroke="#c8c8c8" stroke-width="1.6" stroke-dasharray="4 3"/>
<rect x="11" y="355" width="62.5" height="60.5" rx="5" fill="#dadada" stroke="#bcbcbc" stroke-width="1.5"/>
<rect x="25.3" y="367.7" width="29.2" height="28.6" fill="none" stroke="#555" stroke-width="1.6" stroke-dasharray="1.8 3.4"/>
<rect x="22.2" y="364.6" width="6.2" height="6.2" fill="#e8e8e8" stroke="#666" stroke-width="1.4"/>
<rect x="51.2" y="364.6" width="6.2" height="6.2" fill="#e8e8e8" stroke="#666" stroke-width="1.4"/>
<rect x="22.2" y="393.2" width="6.2" height="6.2" fill="#e8e8e8" stroke="#666" stroke-width="1.4"/>
<rect x="51.2" y="393.2" width="6.2" height="6.2" fill="#e8e8e8" stroke="#666" stroke-width="1.4"/>
<path d="M28.7 364.8L30.5 399L38.8 391L46 406.8L52.3 404L45.3 388.6L56.5 387.2Z" fill="#fff" stroke="#111" stroke-width="1.8" stroke-linejoin="miter"/>
<defs><linearGradient id="smg426" x1="0" y1="0" x2="1" y2="0"><stop offset="0" stop-color="#d2d2d2"/><stop offset="0.35" stop-color="#e9e9e9"/><stop offset="1" stop-color="#dcdcdc"/></linearGradient></defs><path d="M30 428.5H61.2V466.5H28Z" fill="url(#smg426)" stroke="#9c9c9c" stroke-width="1.6"/><path d="M22.8 429C22.8 425.5 30.4 425.5 30.4 429V461.5C30.4 465.5 27.5 466.7 25.5 466.7C23.5 466.7 22.8 464.5 22.8 462.5Z" fill="#ececec" stroke="#9c9c9c" stroke-width="1.5"/><path d="M23.5 462.5C25 460.0 29 460.5 30 463.0" fill="none" stroke="#b4b4b4" stroke-width="1.2"/>
<path d="M48.5 431.6L59.3 441H52.8V447.5H44.4V441H38Z" fill="#5b8cc4" stroke="#3d6593" stroke-width="1.1"/><path d="M32.6 444.6H36.2V450H41.7V457.4H36.2V463H32.6Z" fill="#5b8cc4" stroke="#3d6593" stroke-width="1.1"/><rect x="54.8" y="450" width="5.6" height="6.6" fill="#5b8cc4" stroke="#3d6593" stroke-width="1.1"/><rect x="44.6" y="460.2" width="7.4" height="6.4" fill="#5b8cc4" stroke="#3d6593" stroke-width="1.1"/>
<path d="M34.8 493.7L59.3 505.7M34.8 493.7L25 527.8" stroke="#111" stroke-width="2.2"/><path d="M25 527.8L46 514" stroke="#111" stroke-width="2.2" stroke-dasharray="2.2 2.2"/>
<circle cx="34.8" cy="493.7" r="5.1" fill="#2b7de9" stroke="#1f62c0" stroke-width="0.8"/><circle cx="59.3" cy="505.7" r="5.1" fill="#2b7de9" stroke="#1f62c0" stroke-width="0.8"/><circle cx="25" cy="527.8" r="5.1" fill="#2b7de9" stroke="#1f62c0" stroke-width="0.8"/>
<path d="M39.5 517L48 508.5C50.5 506.8 53 507 54.5 508.5L46 519.5Z" fill="#d0d0d0" stroke="#777" stroke-width="1.2"/><path d="M38.5 510.5L43 508L47.5 512L43 516Z" fill="#c98f1a"/><path d="M61.5 507.5L50.5 518.5" stroke="#8a8a8a" stroke-width="3"/><path d="M61.5 507.5L50.5 518.5" stroke="#e6e6e6" stroke-width="1.2"/><path d="M49 516L62.5 529L58.5 533.5L44.5 520Z" fill="#c0861c" stroke="#9a6710" stroke-width="0.8"/><path d="M49.5 518L40 531.5" stroke="#d9a800" stroke-width="6.4" stroke-linecap="round"/><path d="M49 517.5L39.5 531" stroke="#ffe24a" stroke-width="3.2" stroke-linecap="round"/>
<defs><linearGradient id="smg554" x1="0" y1="0" x2="1" y2="0"><stop offset="0" stop-color="#d2d2d2"/><stop offset="0.35" stop-color="#e9e9e9"/><stop offset="1" stop-color="#dcdcdc"/></linearGradient></defs><path d="M30 556.5H61.2V595H28Z" fill="url(#smg554)" stroke="#9c9c9c" stroke-width="1.6"/><path d="M22.8 557C22.8 553.5 30.4 553.5 30.4 557V590C30.4 594 27.5 595.2 25.5 595.2C23.5 595.2 22.8 593 22.8 591Z" fill="#ececec" stroke="#9c9c9c" stroke-width="1.5"/><path d="M23.5 591C25 588.5 29 589 30 591.5" fill="none" stroke="#b4b4b4" stroke-width="1.2"/>
<g transform="translate(48,582)" ><rect x="0" y="0" width="18" height="18" rx="3.6" fill="#578c55"/><rect x="1.3" y="1.3" width="15.4" height="8.0" rx="2.6" fill="#86ad84" opacity="0.8"/><path d="M9.0 3.2V14.8M3.2 9.0H14.8" stroke="#fff" stroke-width="4"/></g>
<defs><linearGradient id="m3d" x1="0" y1="0" x2="1" y2="1"><stop offset="0" stop-color="#f0f0f0"/><stop offset="1" stop-color="#c4c4c4"/></linearGradient></defs><path d="M19.5 647.5L37 626L52 624.5L60.8 625.8L61 652L46 653.5L31.5 650.5Z" fill="url(#m3d)" stroke="#a8a8a8" stroke-width="1.5" stroke-linejoin="round"/><path d="M28.5 637L43 633.5L60.5 634M24 643L40 640.5L50.5 643.5L61 641M33 630.5L37 648M45.5 625.5L41.5 640L46 652M54.5 625L50 643.5" fill="none" stroke="#aaa" stroke-width="1.1"/>
<g transform="translate(48,646)" ><rect x="0" y="0" width="18" height="18" rx="3.6" fill="#578c55"/><rect x="1.3" y="1.3" width="15.4" height="8.0" rx="2.6" fill="#86ad84" opacity="0.8"/><path d="M9.0 3.2V14.8M3.2 9.0H14.8" stroke="#fff" stroke-width="4"/></g>
<g transform="translate(22.8,691)" ><defs><linearGradient id="sky" x1="0" y1="0" x2="0" y2="1"><stop offset="0" stop-color="#3f9fe8"/><stop offset="1" stop-color="#a9d6f5"/></linearGradient><linearGradient id="snd" x1="0" y1="0" x2="0" y2="1"><stop offset="0" stop-color="#ddd08a"/><stop offset="1" stop-color="#a8922e"/></linearGradient></defs><rect x="0" y="0" width="38.5" height="26.5" fill="url(#sky)"/><path d="M0 13.780000000000001L11.549999999999999 7.420000000000001L38.5 16.43V26.5H0Z" fill="url(#snd)"/></g><rect x="22.8" y="691" width="38.5" height="26.5" fill="none" stroke="#8e8e8e" stroke-width="1.8"/>
<g transform="translate(48,710)" ><rect x="0" y="0" width="18" height="18" rx="3.6" fill="#578c55"/><rect x="1.3" y="1.3" width="15.4" height="8.0" rx="2.6" fill="#86ad84" opacity="0.8"/><path d="M9.0 3.2V14.8M3.2 9.0H14.8" stroke="#fff" stroke-width="4"/></g>
<rect x="22.6" y="754.6" width="38.8" height="26.6" fill="#f1f1f1" stroke="#9a9a9a" stroke-width="1.6"/><path d="M34.3 764.2V760.3H49.8V764.2M42 760.3V775.6M39.2 775.6H44.8" fill="none" stroke="#222" stroke-width="1.5"/>
<g transform="translate(48,774)" ><rect x="0" y="0" width="18" height="18" rx="3.6" fill="#578c55"/><rect x="1.3" y="1.3" width="15.4" height="8.0" rx="2.6" fill="#86ad84" opacity="0.8"/><path d="M9.0 3.2V14.8M3.2 9.0H14.8" stroke="#fff" stroke-width="4"/></g>
<rect x="24.6" y="814.6" width="8.8" height="8.8" fill="#ffd60a" stroke="#f5a623" stroke-width="1.6"/><rect x="24.6" y="826.6" width="8.8" height="8.8" fill="#ff4a00" stroke="#c8320a" stroke-width="1.6"/><rect x="24.6" y="838.6" width="8.8" height="8.8" fill="#12b460" stroke="#0a6a3a" stroke-width="1.6"/><path d="M36 821.8H47.8M36 833.9H54M36 846H44" stroke="#9c9c9c" stroke-width="3.6"/>
<g transform="translate(48,838)" ><rect x="0" y="0" width="18" height="18" rx="3.6" fill="#578c55"/><rect x="1.3" y="1.3" width="15.4" height="8.0" rx="2.6" fill="#86ad84" opacity="0.8"/><path d="M9.0 3.2V14.8M3.2 9.0H14.8" stroke="#fff" stroke-width="4"/></g>
<rect x="20.8" y="891" width="42.6" height="6.6" fill="#a0a0a0" stroke="#3c3c3c" stroke-width="1.8"/><rect x="29.6" y="892" width="8.4" height="4.6" fill="#f4f4f4"/><rect x="46" y="892" width="8" height="4.6" fill="#f4f4f4"/>
<g transform="translate(48,902)" ><rect x="0" y="0" width="18" height="18" rx="3.6" fill="#578c55"/><rect x="1.3" y="1.3" width="15.4" height="8.0" rx="2.6" fill="#86ad84" opacity="0.8"/><path d="M9.0 3.2V14.8M3.2 9.0H14.8" stroke="#fff" stroke-width="4"/></g>
<path d="M41.7 939.8L56.3 980.5L41.7 968.7L27.1 980.5Z" fill="#5d8ac0" stroke="#3f6594" stroke-width="1.4" stroke-linejoin="round"/><path d="M41.7 942L41.7 968L29 978.5Z" fill="#7ba3d3" opacity="0.6"/><text x="41.8" y="965.6" text-anchor="middle" font-family="Liberation Sans, sans-serif" font-weight="bold" font-size="13.5" fill="#fff">N</text>
<g transform="translate(46.5,964.6)" ><rect x="0" y="0" width="19" height="19" rx="3.6" fill="#578c55"/><rect x="1.3" y="1.3" width="16.4" height="8.5" rx="2.6" fill="#86ad84" opacity="0.8"/><path d="M9.5 3.2V15.8M3.2 9.5H15.8" stroke="#fff" stroke-width="4"/></g>
<rect x="22.2" y="1020.5" width="27.5" height="20.8" fill="#c7e2f8" stroke="#7da3bf" stroke-width="1.5"/><circle cx="49" cy="1024.4" r="12.2" fill="#f5b3b3" stroke="#d87878" stroke-width="1.5"/><path d="M39.2 1002.5L52.6 1026.6H26.4Z" fill="#c6f5c6" stroke="#79b879" stroke-width="1.5" stroke-linejoin="round"/>
<g transform="translate(48.4,1030.4)" ><rect x="0" y="0" width="17.6" height="17.6" rx="3.6" fill="#578c55"/><rect x="1.3" y="1.3" width="15.000000000000002" height="7.800000000000001" rx="2.6" fill="#86ad84" opacity="0.8"/><path d="M8.8 3.2V14.400000000000002M3.2 8.8H14.400000000000002" stroke="#fff" stroke-width="4"/></g>
<path d="M58 1043H69L63.5 1048.3Z" fill="#222"/>
<path d="M25 1104.8L53 1076.6" stroke="#333" stroke-width="2"/><path d="M61.6 1068L48.8 1072.4L57.4 1081.2Z" fill="#f4f4f4" stroke="#333" stroke-width="1.7" stroke-linejoin="miter"/><rect x="22.2" y="1102" width="5.8" height="5.8" fill="#333"/>
<g transform="translate(48.4,1094.6)" ><rect x="0" y="0" width="17.6" height="17.6" rx="3.6" fill="#578c55"/><rect x="1.3" y="1.3" width="15.000000000000002" height="7.800000000000001" rx="2.6" fill="#86ad84" opacity="0.8"/><path d="M8.8 3.2V14.400000000000002M3.2 8.8H14.400000000000002" stroke="#fff" stroke-width="4"/></g>
<path d="M34.9 1133.8L58.8 1146M34.9 1133.8L25 1167.8" stroke="#111" stroke-width="2.2"/><path d="M25 1167.8L58.8 1146" stroke="#111" stroke-width="2.2" stroke-dasharray="2.2 2.2"/>
<circle cx="34.9" cy="1133.8" r="5" fill="#2b7de9" stroke="#1f62c0" stroke-width="0.8"/><circle cx="58.8" cy="1146" r="5" fill="#2b7de9" stroke="#1f62c0" stroke-width="0.8"/><circle cx="25" cy="1167.8" r="5" fill="#2b7de9" stroke="#1f62c0" stroke-width="0.8"/>
<g transform="translate(48.4,1158.6)" ><rect x="0" y="0" width="17.6" height="17.6" rx="3.6" fill="#578c55"/><rect x="1.3" y="1.3" width="15.000000000000002" height="7.800000000000001" rx="2.6" fill="#86ad84" opacity="0.8"/><path d="M8.8 3.2V14.400000000000002M3.2 8.8H14.400000000000002" stroke="#fff" stroke-width="4"/></g>
<path d="M58 1171H69L63.5 1176.3Z" fill="#222"/>
<rect x="22.8" y="1197" width="38.6" height="38" fill="#f2f2f2" stroke="#a0a0a0" stroke-width="1.6"/><path d="M26 1203.8H35M26 1209.8H48M26 1215.8H46M26 1221.8H39.5M26 1227.8H44" stroke="#6f9bd0" stroke-width="3.4"/><rect x="33.5" y="1200" width="25" height="17" fill="#f2f2f2" opacity="0.75"/><path d="M41.5 1203L35 1209L41.5 1215M50.5 1203L57 1209L50.5 1215M48.6 1201.5L43.6 1216.5" fill="none" stroke="#111" stroke-width="1.9"/>
<g transform="translate(48.4,1222)" ><rect x="0" y="0" width="17.6" height="17.6" rx="3.6" fill="#578c55"/><rect x="1.3" y="1.3" width="15.000000000000002" height="7.800000000000001" rx="2.6" fill="#86ad84" opacity="0.8"/><path d="M8.8 3.2V14.400000000000002M3.2 8.8H14.400000000000002" stroke="#fff" stroke-width="4"/></g>
<rect x="22.8" y="1261" width="38.6" height="38.4" fill="#ececec" stroke="#6f95c5" stroke-width="1.6"/><rect x="23.6" y="1261.8" width="37" height="9" fill="#bcd8f1"/><path d="M23 1271.2H61" stroke="#6f95c5" stroke-width="1.4"/><path d="M28 1266.4H35.5M40 1266.4H55.5" stroke="#6f9bd0" stroke-width="3.2"/><path d="M28 1275.8H35.5M40 1275.8H55.5M28 1281.8H35.5M40 1281.8H55.5M28 1287.8H35.5M40 1287.8H50M28 1293.8H35.5M40 1293.8H48" stroke="#6f9bd0" stroke-width="1.7"/>
<g transform="translate(46.3,1284.8)" ><rect x="0" y="0" width="19.2" height="19.2" rx="3.6" fill="#578c55"/><rect x="1.3" y="1.3" width="16.599999999999998" height="8.6" rx="2.6" fill="#86ad84" opacity="0.8"/><path d="M9.6 3.2V16.0M3.2 9.6H16.0" stroke="#fff" stroke-width="4"/></g>
</svg>
<div class="a" style="left:80px;top:199px;width:1756px;height:31px;background:#ececec"></div>
<div class="a" style="left:79.2px;top:199px;width:32.8px;height:1429px;background:#ececec;border-left:1.8px solid #b9b9b9"></div>
<div class="a" style="left:112px;top:230px;width:1696px;height:1370px;background:#fff;overflow:hidden"><div class="a" style="left:0;top:0;width:1696px;height:30px;background:#d6d6d6"></div>
<svg style="left:-112px;top:-230px" width="2694" height="1688" viewBox="0 0 2694 1688">
<path d="M390.6 756.5L397.0 749.0L404.3 742.8L414.0 744.0L422.6 748.0L433.2 764.1M384.5 773.3L376.3 828.0M370.8 844.8L360.2 899.5M355.6 917.8L349.5 936.0L345.9 971.0M345.0 989.3L338.0 1044.6M335.0 1061.5L327.2 1086.0L332.0 1116.0M333.0 1134.5L334.3 1189.5M445.4 776.3L485.0 815.9M497.1 828.0L529.0 853.9L537.3 866.0M547.4 881.3L576.5 928.7M583.0 944.5L610.2 992.8M617.2 1008.0L645.2 1057.6M652.8 1072.9L684.8 1119.7M691.5 1134.3L695.4 1167.8L707.6 1178.5M718.2 1194.0L753.9 1239.0M763.3 1252.0L800.4 1296.7M809.5 1310.4L846.0 1353.0M855.8 1365.8L894.0 1409.0M903.0 1422.0L940.4 1465.6M950.0 1478.0L984.5 1522.8M989.0 1539.0L1008.0 1592.5M112.2 846.3L127.4 885.9M132.0 902.6L154.8 948.2L155.7 952.8M156.3 971.0L161.5 1025.8M121.3 1015.5L130.4 1016.7L145.6 1028.9L157.8 1034.0L154.6 1045.6M152.0 1062.5L152.0 1091.3L148.6 1108.0L143.7 1117.0M141.7 1134.0L135.7 1147.8M112.3 1164.7L127.8 1156.7L133.7 1164.7L142.7 1195.4M152.6 1210.3L197.2 1216.3L203.0 1221.0L207.0 1246.0M217.0 1220.0L238.9 1220.0M256.7 1219.6L298.4 1219.6L311.3 1215.3M328.2 1207.3L358.0 1234.0M384.4 1236.5L466.6 1236.5M517.5 1245.7L552.0 1238.8L569.6 1270.0L539.5 1322.0M587.0 1268.9L615.9 1266.6M615.9 1266.6L625.4 1247.0L639.0 1221.0L671.0 1188.5L695.0 1181.0L707.6 1178.5M615.9 1266.6L730.4 1378.0L718.0 1401.7L706.0 1414.0L620.9 1468.7L599.6 1482.4L569.0 1490.6L538.0 1492.0L512.0 1503.0M452.7 1334.9L466.6 1334.9M492.0 1329.0L498.0 1330.0L497.8 1340.6L528.0 1340.6M497.8 1340.6L500.0 1354.5M376.3 1331.4L382.0 1340.6M407.5 1362.6L445.7 1359.0L443.4 1344.0M501.3 1373.0L509.4 1412.4L526.8 1433.0L532.5 1458.7M408.5 1390.0L411.0 1393.5M491.0 1416.0L493.5 1419.0M425.0 1464.5L441.0 1464.5M240.9 1220.2L240.5 1260.0L238.9 1300.0L238.9 1339.0L233.0 1355.6L238.9 1376.0L236.6 1413.4L243.5 1420.0L262.0 1426.0L259.7 1448.0L248.0 1480.6L250.5 1492.0L262.0 1498.0L280.6 1501.4M242.4 1515.0L276.0 1516.0L301.4 1509.5M317.6 1506.0L372.0 1492.0M389.0 1491.0L424.0 1484.0L442.0 1487.0M252.8 1517.6L250.5 1536.0M112.0 1589.0L127.8 1598.6L131.0 1601.0M180.0 1596.0L184.0 1601.0M504.7 1529.5L513.9 1584.0" fill="none" stroke="#222" stroke-width="3.9" stroke-linejoin="round"/>
<path d="M112 1409C118 1411 118 1418 113 1420C120 1422 120 1431 112 1433" fill="none" stroke="#222" stroke-width="2"/>
<text transform="translate(109,1283) rotate(-17.5)" font-family="Liberation Sans, sans-serif" font-size="35" fill="#222" letter-spacing="0.3">r camp line</text>
<path d="M116.0 955.0L117.0 1000.0L118.0 1049.6L121.0 1129.0L139.7 1158.7L142.7 1178.6L211.0 1215.0L221.0 1246.0" fill="none" stroke="#2eaccf" stroke-width="9.5" stroke-linejoin="round"/>
<path d="M110.0 1162.0L121.0 1139.0" fill="none" stroke="#2eaccf" stroke-width="9"/>
<path d="M108 1452C125 1490 150 1520 172 1543" fill="none" stroke="#2eaccf" stroke-width="8.5"/>
<path d="M121.8 1273.0L176.4 1273.0M188.7 1273.0L221.0 1273.0L240.9 1261.0M248.8 1252.0L264.7 1243.5L292.5 1242.5L299.5 1250.0M303.4 1260.0L353.0 1273.5M353.0 1273.5L356.6 1250.4L364.7 1236.5L383.2 1231.0M394.8 1231.0L452.7 1232.0M444.8 1143.9L450.4 1199.4M450.8 1211.0L456.9 1266.6M457.8 1278.0L463.0 1329.0M480.5 1230.5L492.0 1231.5L503.6 1247.5L517.5 1244.6M529.0 1241.0L552.2 1233.0L561.5 1211.0L566.0 1206.0M573.0 1197.0L610.0 1156.6M558.0 1219.0L569.6 1231.9L573.0 1264.0M570.7 1278.0L544.0 1324.4M537.0 1334.0L531.0 1345.0M355.5 1280.5L375.0 1329.0M379.8 1341.8L386.7 1354.5L401.8 1363.8L406.4 1384.6M407.5 1396.0L418.0 1450.6M419.0 1462.0L420.5 1478.0M252.8 1511.8L306.0 1499.0M317.6 1495.6L372.0 1484.0M383.6 1481.7L424.0 1474.8L448.0 1482.0" fill="none" stroke="#3ab9d8" stroke-width="10" stroke-linejoin="round"/>
<path d="M119.7 1566C140 1561 155 1553 169.4 1545.4C182 1538 192 1529 204.2 1522.2C216 1517 228 1515.5 252.8 1511.8" fill="none" stroke="#3ab9d8" stroke-width="9"/>
<circle cx="486.3" cy="1050" r="45.3" fill="#bfcf50"/>
<text x="486.3" y="1071.2" text-anchor="middle" font-family="Liberation Sans, sans-serif" font-size="46" fill="#0a0a0a" stroke="#0a0a0a" stroke-width="1">9</text>
<circle cx="316.4" cy="1366.5" r="45.3" fill="#bfcf50"/>
<path d="M308.5 1353.8V1385.8H302.4V1361.6L297.1 1366.3L294.1 1362.1L303.7 1353.8Z" fill="#0a0a0a"/><path d="M334.7 1353.8V1385.8H328.6V1361.6L323.3 1366.3L320.3 1362.1L329.9 1353.8Z" fill="#0a0a0a"/>
<circle cx="600.5" cy="1384" r="45.3" fill="#bfcf50"/>
<text x="600.5" y="1405.2" text-anchor="middle" font-family="Liberation Sans, sans-serif" font-size="46" fill="#0a0a0a" stroke="#0a0a0a" stroke-width="1">5</text>
<circle cx="486.3" cy="1464.5" r="45.3" fill="#bfcf50"/>
<text x="486.3" y="1485.7" text-anchor="middle" font-family="Liberation Sans, sans-serif" font-size="46" fill="#0a0a0a" stroke="#0a0a0a" stroke-width="1">3</text>
<circle cx="218.5" cy="1566" r="45.3" fill="#bfcf50"/>
<text x="218.5" y="1587.2" text-anchor="middle" font-family="Liberation Sans, sans-serif" font-size="46" fill="#0a0a0a" stroke="#0a0a0a" stroke-width="1">6</text>
<circle cx="761.5" cy="1585.5" r="45.3" fill="#bfcf50"/>
<path d="M753.2 1573.1V1605.1H747.1V1580.9L741.8 1585.6L738.8 1581.4L748.4 1573.1Z" fill="#0a0a0a"/><text x="774.6" y="1606.1" text-anchor="middle" font-family="Liberation Sans, sans-serif" font-size="46" fill="#0a0a0a" stroke="#0a0a0a" stroke-width="1">0</text>
<circle cx="82.4" cy="1091" r="45.3" fill="#bfcf50"/>
<path d="M116.0 1040.0L118.0 1049.6L121.0 1129.0" fill="none" stroke="#2eaccf" stroke-width="9.5" opacity="0.85"/>
<text transform="translate(453.5,1097.5) rotate(85.3)" font-family="Liberation Sans, sans-serif" font-size="34" fill="#222" textLength="281" lengthAdjust="spacing">Borehole to house</text>
</svg></div>
<svg style="left:0;top:0" width="2694" height="1688" viewBox="0 0 2694 1688">
<path d="M196.0 200.5V230M301.0 200.5V230M406.0 200.5V230M511.0 200.5V230M616.0 200.5V230M721.0 200.5V230M826.5 200.5V230M931.5 200.5V230M1036.5 200.5V230M1141.5 200.5V230M1246.5 200.5V230M1351.5 200.5V230M1456.5 200.5V230M1561.5 200.5V230M1666.5 200.5V230M1772.0 200.5V230M82.3 260.0H112M82.3 365.0H112M82.3 470.0H112M82.3 575.0H112M82.3 679.5H112M82.3 784.5H112M82.3 889.5H112M82.3 994.5H112M82.3 1099.5H112M82.3 1204.5H112M82.3 1309.5H112M82.3 1414.5H112M82.3 1519.5H112M82.3 1624.0H112" stroke="#333" stroke-width="1.8" fill="none"/>
<path d="M143.5 219.3V230M248.5 219.3V230M353.5 219.3V230M458.5 219.3V230M563.5 219.3V230M668.5 219.3V230M774.0 219.3V230M879.0 219.3V230M984.0 219.3V230M1089.0 219.3V230M1194.0 219.3V230M1299.0 219.3V230M1404.0 219.3V230M1509.0 219.3V230M1614.0 219.3V230M1719.0 219.3V230M1824.5 219.3V230M101.3 312.5H112M101.3 417.5H112M101.3 522.5H112M101.3 627.0H112M101.3 732.0H112M101.3 837.0H112M101.3 942.0H112M101.3 1047.0H112M101.3 1152.0H112M101.3 1257.0H112M101.3 1362.0H112M101.3 1467.0H112M101.3 1572.0H112" stroke="#333" stroke-width="1.8" fill="none"/>
<path d="M112.0 223.2V230M122.5 223.2V230M133.0 223.2V230M154.0 223.2V230M164.5 223.2V230M175.0 223.2V230M185.5 223.2V230M206.5 223.2V230M217.0 223.2V230M227.5 223.2V230M238.0 223.2V230M259.0 223.2V230M269.5 223.2V230M280.0 223.2V230M290.5 223.2V230M311.5 223.2V230M322.0 223.2V230M332.5 223.2V230M343.0 223.2V230M364.0 223.2V230M374.5 223.2V230M385.0 223.2V230M395.5 223.2V230M416.5 223.2V230M427.0 223.2V230M437.5 223.2V230M448.0 223.2V230M469.0 223.2V230M479.5 223.2V230M490.0 223.2V230M500.5 223.2V230M521.5 223.2V230M532.0 223.2V230M542.5 223.2V230M553.0 223.2V230M574.0 223.2V230M584.5 223.2V230M595.0 223.2V230M605.5 223.2V230M626.5 223.2V230M637.0 223.2V230M647.5 223.2V230M658.0 223.2V230M679.0 223.2V230M689.5 223.2V230M700.0 223.2V230M710.5 223.2V230M732.0 223.2V230M742.5 223.2V230M753.0 223.2V230M763.5 223.2V230M784.5 223.2V230M795.0 223.2V230M805.5 223.2V230M816.0 223.2V230M837.0 223.2V230M847.5 223.2V230M858.0 223.2V230M868.5 223.2V230M889.5 223.2V230M900.0 223.2V230M910.5 223.2V230M921.0 223.2V230M942.0 223.2V230M952.5 223.2V230M963.0 223.2V230M973.5 223.2V230M994.5 223.2V230M1005.0 223.2V230M1015.5 223.2V230M1026.0 223.2V230M1047.0 223.2V230M1057.5 223.2V230M1068.0 223.2V230M1078.5 223.2V230M1099.5 223.2V230M1110.0 223.2V230M1120.5 223.2V230M1131.0 223.2V230M1152.0 223.2V230M1162.5 223.2V230M1173.0 223.2V230M1183.5 223.2V230M1204.5 223.2V230M1215.0 223.2V230M1225.5 223.2V230M1236.0 223.2V230M1257.0 223.2V230M1267.5 223.2V230M1278.0 223.2V230M1288.5 223.2V230M1309.5 223.2V230M1320.0 223.2V230M1330.5 223.2V230M1341.0 223.2V230M1362.0 223.2V230M1372.5 223.2V230M1383.0 223.2V230M1393.5 223.2V230M1414.5 223.2V230M1425.0 223.2V230M1435.5 223.2V230M1446.0 223.2V230M1467.0 223.2V230M1477.5 223.2V230M1488.0 223.2V230M1498.5 223.2V230M1519.5 223.2V230M1530.0 223.2V230M1540.5 223.2V230M1551.0 223.2V230M1572.0 223.2V230M1582.5 223.2V230M1593.0 223.2V230M1603.5 223.2V230M1624.5 223.2V230M1635.0 223.2V230M1645.5 223.2V230M1656.0 223.2V230M1677.0 223.2V230M1687.5 223.2V230M1698.0 223.2V230M1708.5 223.2V230M1729.5 223.2V230M1740.0 223.2V230M1750.5 223.2V230M1761.0 223.2V230M1782.5 223.2V230M1793.0 223.2V230M1803.5 223.2V230M1814.0 223.2V230M105.4 239.0H112M105.4 249.5H112M105.4 270.5H112M105.4 281.0H112M105.4 291.5H112M105.4 302.0H112M105.4 323.0H112M105.4 333.5H112M105.4 344.0H112M105.4 354.5H112M105.4 375.5H112M105.4 386.0H112M105.4 396.5H112M105.4 407.0H112M105.4 428.0H112M105.4 438.5H112M105.4 449.0H112M105.4 459.5H112M105.4 480.5H112M105.4 491.0H112M105.4 501.5H112M105.4 512.0H112M105.4 533.0H112M105.4 543.5H112M105.4 554.0H112M105.4 564.5H112M105.4 585.0H112M105.4 595.5H112M105.4 606.0H112M105.4 616.5H112M105.4 637.5H112M105.4 648.0H112M105.4 658.5H112M105.4 669.0H112M105.4 690.0H112M105.4 700.5H112M105.4 711.0H112M105.4 721.5H112M105.4 742.5H112M105.4 753.0H112M105.4 763.5H112M105.4 774.0H112M105.4 795.0H112M105.4 805.5H112M105.4 816.0H112M105.4 826.5H112M105.4 847.5H112M105.4 858.0H112M105.4 868.5H112M105.4 879.0H112M105.4 900.0H112M105.4 910.5H112M105.4 921.0H112M105.4 931.5H112M105.4 952.5H112M105.4 963.0H112M105.4 973.5H112M105.4 984.0H112M105.4 1005.0H112M105.4 1015.5H112M105.4 1026.0H112M105.4 1036.5H112M105.4 1057.5H112M105.4 1068.0H112M105.4 1078.5H112M105.4 1089.0H112M105.4 1110.0H112M105.4 1120.5H112M105.4 1131.0H112M105.4 1141.5H112M105.4 1162.5H112M105.4 1173.0H112M105.4 1183.5H112M105.4 1194.0H112M105.4 1215.0H112M105.4 1225.5H112M105.4 1236.0H112M105.4 1246.5H112M105.4 1267.5H112M105.4 1278.0H112M105.4 1288.5H112M105.4 1299.0H112M105.4 1320.0H112M105.4 1330.5H112M105.4 1341.0H112M105.4 1351.5H112M105.4 1372.5H112M105.4 1383.0H112M105.4 1393.5H112M105.4 1404.0H112M105.4 1425.0H112M105.4 1435.5H112M105.4 1446.0H112M105.4 1456.5H112M105.4 1477.5H112M105.4 1488.0H112M105.4 1498.5H112M105.4 1509.0H112M105.4 1530.0H112M105.4 1540.5H112M105.4 1551.0H112M105.4 1561.5H112M105.4 1582.5H112M105.4 1593.0H112M105.4 1603.5H112M105.4 1614.0H112" stroke="#333" stroke-width="1.8" fill="none"/>
<path d="M111.2 223V230M105 230H112" stroke="#333" stroke-width="1.6" fill="none"/>
<path d="M1791.5 200.5V230" stroke="#e8202a" stroke-width="2.2"/>
<path d="M80.5 780.4H112" stroke="#e8202a" stroke-width="2.2"/><path d="M1835.6 200V230" stroke="#c2c2c2" stroke-width="1.2"/>
</svg>
<div class="t" style="left:199.6px;top:202.3px;font-size:17px;color:#4a4a4a;letter-spacing:0.25px"><span style="letter-spacing:-1.6px;margin-left:-0.8px">1</span><span style="letter-spacing:-1.6px;margin-left:-0.8px">1</span>0</div>
<div class="t" style="left:304.7px;top:202.3px;font-size:17px;color:#4a4a4a;letter-spacing:0.25px"><span style="letter-spacing:-1.6px;margin-left:-0.8px">1</span>20</div>
<div class="t" style="left:409.7px;top:202.3px;font-size:17px;color:#4a4a4a;letter-spacing:0.25px"><span style="letter-spacing:-1.6px;margin-left:-0.8px">1</span>30</div>
<div class="t" style="left:514.8px;top:202.3px;font-size:17px;color:#4a4a4a;letter-spacing:0.25px"><span style="letter-spacing:-1.6px;margin-left:-0.8px">1</span>40</div>
<div class="t" style="left:619.8px;top:202.3px;font-size:17px;color:#4a4a4a;letter-spacing:0.25px"><span style="letter-spacing:-1.6px;margin-left:-0.8px">1</span>50</div>
<div class="t" style="left:724.9px;top:202.3px;font-size:17px;color:#4a4a4a;letter-spacing:0.25px"><span style="letter-spacing:-1.6px;margin-left:-0.8px">1</span>60</div>
<div class="t" style="left:829.9px;top:202.3px;font-size:17px;color:#4a4a4a;letter-spacing:0.25px"><span style="letter-spacing:-1.6px;margin-left:-0.8px">1</span>70</div>
<div class="t" style="left:935.0px;top:202.3px;font-size:17px;color:#4a4a4a;letter-spacing:0.25px"><span style="letter-spacing:-1.6px;margin-left:-0.8px">1</span>80</div>
<div class="t" style="left:1040.0px;top:202.3px;font-size:17px;color:#4a4a4a;letter-spacing:0.25px"><span style="letter-spacing:-1.6px;margin-left:-0.8px">1</span>90</div>
<div class="t" style="left:1145.0px;top:202.3px;font-size:17px;color:#4a4a4a;letter-spacing:0.25px">200</div>
<div class="t" style="left:1250.1px;top:202.3px;font-size:17px;color:#4a4a4a;letter-spacing:0.25px">2<span style="letter-spacing:-1.6px;margin-left:-0.8px">1</span>0</div>
<div class="t" style="left:1355.2px;top:202.3px;font-size:17px;color:#4a4a4a;letter-spacing:0.25px">220</div>
<div class="t" style="left:1460.2px;top:202.3px;font-size:17px;color:#4a4a4a;letter-spacing:0.25px">230</div>
<div class="t" style="left:1565.2px;top:202.3px;font-size:17px;color:#4a4a4a;letter-spacing:0.25px">240</div>
<div class="t" style="left:1670.3px;top:202.3px;font-size:17px;color:#4a4a4a;letter-spacing:0.25px">250</div>
<div class="t" style="left:1775.4px;top:202.3px;font-size:17px;color:#4a4a4a;letter-spacing:0.25px">260</div>
<div class="t" style="left:83.8px;top:268.2px;font-size:17px;color:#4a4a4a;letter-spacing:0.25px;writing-mode:vertical-rl;transform:rotate(180deg)">0</div>
<div class="t" style="left:83.8px;top:373.1px;font-size:17px;color:#4a4a4a;letter-spacing:0.25px;writing-mode:vertical-rl;transform:rotate(180deg)"><span style="letter-spacing:-1.6px;margin-left:-0.8px">1</span>0</div>
<div class="t" style="left:83.8px;top:478.1px;font-size:17px;color:#4a4a4a;letter-spacing:0.25px;writing-mode:vertical-rl;transform:rotate(180deg)">20</div>
<div class="t" style="left:83.8px;top:583.0px;font-size:17px;color:#4a4a4a;letter-spacing:0.25px;writing-mode:vertical-rl;transform:rotate(180deg)">30</div>
<div class="t" style="left:83.8px;top:688.0px;font-size:17px;color:#4a4a4a;letter-spacing:0.25px;writing-mode:vertical-rl;transform:rotate(180deg)">40</div>
<div class="t" style="left:83.8px;top:792.9px;font-size:17px;color:#4a4a4a;letter-spacing:0.25px;writing-mode:vertical-rl;transform:rotate(180deg)">50</div>
<div class="t" style="left:83.8px;top:897.9px;font-size:17px;color:#4a4a4a;letter-spacing:0.25px;writing-mode:vertical-rl;transform:rotate(180deg)">60</div>
<div class="t" style="left:83.8px;top:1002.8px;font-size:17px;color:#4a4a4a;letter-spacing:0.25px;writing-mode:vertical-rl;transform:rotate(180deg)">70</div>
<div class="t" style="left:83.8px;top:1107.8px;font-size:17px;color:#4a4a4a;letter-spacing:0.25px;writing-mode:vertical-rl;transform:rotate(180deg)">80</div>
<div class="t" style="left:83.8px;top:1212.7px;font-size:17px;color:#4a4a4a;letter-spacing:0.25px;writing-mode:vertical-rl;transform:rotate(180deg)">90</div>
<div class="t" style="left:83.8px;top:1317.7px;font-size:17px;color:#4a4a4a;letter-spacing:0.25px;writing-mode:vertical-rl;transform:rotate(180deg)"><span style="letter-spacing:-1.6px;margin-left:-0.8px">1</span>00</div>
<div class="t" style="left:83.8px;top:1422.6px;font-size:17px;color:#4a4a4a;letter-spacing:0.25px;writing-mode:vertical-rl;transform:rotate(180deg)"><span style="letter-spacing:-1.6px;margin-left:-0.8px">1</span><span style="letter-spacing:-1.6px;margin-left:-0.8px">1</span>0</div>
<div class="t" style="left:83.8px;top:1527.6px;font-size:17px;color:#4a4a4a;letter-spacing:0.25px;writing-mode:vertical-rl;transform:rotate(180deg)"><span style="letter-spacing:-1.6px;margin-left:-0.8px">1</span>20</div>
<div class="a" style="left:1808px;top:230px;width:1px;height:1371px;background:#b4b4b4"></div>
<div class="a" style="left:112px;top:1600px;width:1724px;height:1px;background:#b4b4b4"></div>
<div class="a" style="left:1809px;top:230px;width:27px;height:28px;background:linear-gradient(90deg,#fff,#ededed)"></div>
<div class="a" style="left:1809px;top:257px;width:27px;height:64px;background:#e4e4e4;border:1px solid #cfcfcf;border-top:2px solid #c4c4c4;border-bottom:2px solid #c4c4c4"></div>
<div class="a" style="left:1809px;top:321px;width:27px;height:717px;background:linear-gradient(90deg,#fff 0%,#f6f6f6 50%,#ececec 100%)"></div>
<div class="a" style="left:1809px;top:1037px;width:27px;height:535px;background:#e4e4e4;border:1px solid #d6d6d6;border-top:2px solid #b4b4b4;border-bottom:2px solid #c4c4c4"></div>
<div class="a" style="left:1809px;top:1572px;width:27px;height:28px;background:linear-gradient(90deg,#fff,#ededed)"></div>
<div class="a" style="left:112px;top:1601px;width:26px;height:27px;background:linear-gradient(#fff,#ededed)"></div>
<div class="a" style="left:137px;top:1601px;width:587px;height:27px;background:#e4e4e4;border:1px solid #d6d6d6;border-left:2px solid #c4c4c4;border-right:2px solid #b4b4b4"></div>
<div class="a" style="left:724px;top:1601px;width:812px;height:27px;background:linear-gradient(#fff 0%,#f6f6f6 50%,#ececec 100%)"></div>
<div class="a" style="left:1536px;top:1601px;width:244px;height:27px;background:#e4e4e4;border:1px solid #d6d6d6;border-left:2px solid #b4b4b4;border-right:2px solid #c4c4c4"></div>
<div class="a" style="left:1780px;top:1601px;width:28px;height:27px;background:linear-gradient(#fff,#ededed)"></div>
<div class="a" style="left:1808px;top:1600px;width:28px;height:29px;background:#ececec;border:1px solid #b8b8b8"></div>
<div class="a" style="left:80px;top:1628px;width:1756px;height:1px;background:#b4b4b4"></div>
<svg style="left:0;top:0" width="2694" height="1688"><g fill="#555"><path d="M1814.5 247.5L1822.3 239.5L1830 247.5Z"/><path d="M1814 1582L1830 1582L1822 1590Z"/><path d="M126.5 1606.5L126.5 1622L118 1614.2Z"/><path d="M1790 1606L1798.3 1614L1790 1622Z"/></g></svg>
<div class="a" style="left:1848px;top:251.6px;width:842px;height:1.8px;background:#bdbdbd"></div>
<div class="a" style="left:1848px;top:253.4px;width:842px;height:1.8px;background:#fafafa"></div>
<div class="a" style="left:1848px;top:204.5px;width:131px;height:47.1px;background:linear-gradient(#dfdfdf,#dadada);border:1.5px solid #c4c4c4;border-bottom:none;border-radius:5px 5px 0 0"></div>
<div class="a" style="left:2211px;top:204.5px;width:131px;height:47.1px;background:linear-gradient(#dfdfdf,#dadada);border:1.5px solid #c4c4c4;border-bottom:none;border-radius:5px 5px 0 0"></div>
<div class="a" style="left:1978px;top:200.5px;width:234px;height:55px;background:linear-gradient(#f6f6f6,#ececec);border:1.6px solid #b9b9b9;border-left-color:#c6c6c6;border-right-color:#c6c6c6;border-bottom:none;border-radius:6px 6px 0 0"></div>
<div class="t " style="left:1872.5px;top:217.5px;font-size:26.5px;letter-spacing:0.137px;color:#222">Layout</div>
<div class="t " style="left:2002.5px;top:215.5px;font-size:26.5px;letter-spacing:0.194px;color:#222">Item Properties</div>
<div class="t " style="left:2234.5px;top:217.5px;font-size:26.5px;letter-spacing:-0.278px;color:#222">Guides</div>
<div class="t " style="left:1856px;top:264.6px;font-size:23px;letter-spacing:0.123px;color:#222">Item Properties</div>
<svg style="left:2634px;top:263px" width="54" height="24" viewBox="0 0 54 24"><rect x="2.5" y="2" width="20" height="20" rx="4" fill="none" stroke="#4a4a4a" stroke-width="1.5"/><rect x="10" y="6" width="8" height="8" fill="none" stroke="#4a4a4a" stroke-width="1.5"/><rect x="7" y="10" width="8" height="8" fill="#ececec" stroke="#4a4a4a" stroke-width="1.5"/><rect x="30.5" y="2" width="20" height="20" rx="4" fill="none" stroke="#4a4a4a" stroke-width="1.5"/><path d="M34.5 6L46.5 18M46.5 6L34.5 18" stroke="#3a3a3a" stroke-width="3.4"/></svg>
<div class="a" style="left:1848px;top:294.5px;width:841px;height:40px;background:#c8c8c8"></div>
<div class="t b" style="left:1858px;top:301.3px;font-size:27px;letter-spacing:-0.436px;color:#111">Legend</div>
<div class="a" style="left:1848px;top:334px;width:1px;height:1295px;background:#b4b4b4"></div>
<div class="a" style="left:1848px;top:1628px;width:841px;height:1px;background:#b4b4b4"></div>
<div class="a" style="left:2660px;top:334px;width:1px;height:1294px;background:#c8c8c8"></div>
<div class="a" style="left:2661px;top:335px;width:28px;height:27px;background:linear-gradient(90deg,#fff,#ededed);border-bottom:1px solid #c8c8c8"></div>
<div class="a" style="left:2661px;top:362px;width:28px;height:836px;background:linear-gradient(90deg,#fff 0%,#f6f6f6 50%,#ececec 100%)"></div>
<div class="a" style="left:2661px;top:1197px;width:28px;height:403px;background:#e4e4e4;border:1px solid #d6d6d6;border-top:2px solid #b4b4b4;border-bottom:2px solid #c4c4c4"></div>
<div class="a" style="left:2661px;top:1600px;width:28px;height:28px;background:linear-gradient(90deg,#fff,#ededed)"></div>
<svg style="left:0;top:0" width="2694" height="1688"><g fill="#555"><path d="M2666 352L2674.5 344L2683 352Z"/><path d="M2666 1610L2683 1610L2674.5 1618Z"/></g></svg>
<svg style="left:1877px;top:370.5px" width="21" height="13"><path d="M0 0H21L10.5 13Z" fill="#2c2c2c" stroke="#2a2a2a" stroke-width="1" stroke-linejoin="round"/></svg>
<div class="t b" style="left:1916px;top:364.0px;font-size:26.5px;letter-spacing:0.159px;color:#111">Main Properties</div>
<div class="a" style="left:1874.5px;top:398.5px;width:763px;height:341px;background:#e8e8e8;border:1.5px solid #d9d9d9;border-radius:4px"></div>
<div class="t " style="left:1900.5px;top:437.5px;font-size:26.5px;letter-spacing:0.341px;color:#111"><span style="text-decoration:underline;text-underline-offset:3px;text-decoration-thickness:1.5px">T</span>itle</div>
<div class="a" style="left:2070.5px;top:426.5px;width:467px;height:47px;background:#fff;border:1.5px solid #bdbdbd;border-radius:5px;box-shadow:inset 0 1px 1px rgba(0,0,0,0.06)"></div>
<svg style="left:0;top:0" width="2694" height="1688" viewBox="0 0 2694 1688"><path d="M2566.5 438.3L2557.2 448.2C2556.6 448.8 2556.6 449.4 2557.2 450L2566.5 459.7Z" fill="#8e8e92" stroke="#4c4c50" stroke-width="2" stroke-linejoin="round"/><rect x="2567.2" y="435.3" width="23.8" height="29.6" fill="#f8f8f8" stroke="#7c7c76" stroke-width="2"/><path d="M2567 449H2591" stroke="#7c7c76" stroke-width="2"/><path d="M2573 442H2586" stroke="#54545a" stroke-width="3.6" stroke-linecap="round"/><path d="M2572.5 457H2586.5" stroke="#54545a" stroke-width="2"/><path d="M2598.3 459H2607.5L2602.9 463Z" fill="#555"/></svg>
<div class="t " style="left:1900.5px;top:500.0px;font-size:26.5px;letter-spacing:-0.254px;color:#111">Map</div>
<div class="a" style="left:2070.5px;top:489px;width:539px;height:46px;background:linear-gradient(#fdfdfd,#ebebeb);border:2px solid #a6a6a6;border-radius:6px"></div>
<svg style="left:2083px;top:498px" width="30" height="26" viewBox="0 0 30 26"><defs><linearGradient id="mpg" x1="0" y1="0" x2="1" y2="0"><stop offset="0" stop-color="#c8c8c8"/><stop offset="1" stop-color="#f6f6f6"/></linearGradient></defs><path d="M6 2.5H28V24H6Z" fill="url(#mpg)" stroke="#8a8a8a" stroke-width="1.5"/><path d="M1.5 2C4 1 6 2 6 4V24C4 25 2 24.5 1.5 23Z" fill="#e4e4e4" stroke="#8a8a8a" stroke-width="1.3"/></svg>
<div class="t " style="left:2121px;top:499.0px;font-size:26.5px;letter-spacing:-1.191px;color:#111">Map 1</div>
<svg style="left:2578.5px;top:507.5px" width="17" height="9"><path d="M0.3 0.3H16.3L8.3 8.3Z" fill="#555"/></svg>
<div class="t " style="left:1901px;top:560.5px;font-size:26.5px;letter-spacing:-0.013px;color:#111">Wrap text on</div>
<div class="t " style="left:1901px;top:620.5px;font-size:26.5px;letter-spacing:0.118px;color:#111">Arrangement</div>
<div class="a" style="left:2071.5px;top:551px;width:537px;height:12px;background:linear-gradient(#fff,#f0f0f0);border-left:1px solid #c8c8c8;border-right:1px solid #c8c8c8"></div>
<div class="a" style="left:2071px;top:561px;width:538px;height:98px;background:#ececec;border:1.5px solid #a9a9a9;border-top:2px solid #8e8e8e;box-shadow:0 3px 10px 1px rgba(0,0,0,0.30)"></div>
<div class="a" style="left:2072.5px;top:563px;width:535px;height:46.5px;background:#7ba1ea"></div>
<svg style="left:2093px;top:571px" width="32" height="28" viewBox="0 0 32 28"><g fill="#8a8a8a" stroke="#6a6a6a" stroke-width="1"><rect x="1.5" y="1.5" width="7" height="7"/><rect x="1.5" y="10.5" width="7" height="7"/><rect x="1.5" y="19.5" width="7" height="7"/></g><path d="M12 5H24M12 14H28M12 23H21" stroke="#555" stroke-width="2.4"/></svg>
<svg style="left:2093px;top:619px" width="32" height="28" viewBox="0 0 32 28"><g fill="#8a8a8a" stroke="#6a6a6a" stroke-width="1"><rect x="20.5" y="1.5" width="7" height="7"/><rect x="20.5" y="10.5" width="7" height="7"/><rect x="20.5" y="19.5" width="7" height="7"/></g><path d="M1 5H13M1 14H17M1 23H10" stroke="#555" stroke-width="2.4"/></svg>
<div class="t " style="left:2143px;top:573.5px;font-size:26.5px;letter-spacing:0.051px;color:#fff">Symbols on Left</div>
<div class="t " style="left:2143px;top:621.5px;font-size:26.5px;letter-spacing:-0.13px;color:#222">Symbols on Right</div>
<div class="a" style="left:1888px;top:546px;width:734px;height:127px;border:5.3px solid #e8412a"></div>
<div class="a" style="left:1900.5px;top:676.5px;width:27px;height:27px;background:#fff;border:1.5px solid #c2c2c2;border-radius:3px"><svg style="left:4px;top:4px" width="20" height="20" viewBox="0 0 20 20"><path d="M1.5 9.5L4.2 8.3L8.2 14.2L15.3 1.2L18.3 2.6L9 18.6L7 18.6Z" fill="#2a2a2a"/></svg></div>
<div class="t " style="left:1939px;top:678.0px;font-size:26.5px;letter-spacing:0.169px;color:#222">Resize to fit contents</div>
<svg style="left:1877px;top:764.5px" width="21" height="13"><path d="M0 0H21L10.5 13Z" fill="#2c2c2c" stroke="#2a2a2a" stroke-width="1" stroke-linejoin="round"/></svg>
<div class="t b" style="left:1916px;top:758.0px;font-size:26.5px;letter-spacing:0.156px;color:#111">Legend Items</div>
<div class="a" style="left:1874.5px;top:793px;width:763px;height:729px;background:#e8e8e8;border:1.5px solid #d9d9d9;border-radius:4px"></div>
<div class="a" style="left:1900.5px;top:827px;width:27px;height:27px;background:#fff;border:1.5px solid #c2c2c2;border-radius:3px"><svg style="left:4px;top:4px" width="20" height="20" viewBox="0 0 20 20"><path d="M1.5 9.5L4.2 8.3L8.2 14.2L15.3 1.2L18.3 2.6L9 18.6L7 18.6Z" fill="#2a2a2a"/></svg></div>
<div class="t " style="left:1939px;top:828.0px;font-size:26.5px;letter-spacing:0.142px;color:#222">Auto update</div>
<div class="a" style="left:2484.5px;top:821px;width:125px;height:36.5px;background:linear-gradient(#f4f4f4,#ebebeb);border:1.5px solid #c6c6c6;border-radius:5px"></div>
<div class="t " style="left:2499px;top:829.6px;font-size:20.5px;letter-spacing:0.355px;color:#b2b2b2">Update All</div>
<div class="a" style="left:1900px;top:874.5px;width:709px;height:498px;background:#fff;border:1px solid #c4c4c4"></div>
<svg style="left:1947px;top:877.8px" width="34" height="32" viewBox="0 0 34 32"><g fill="#fff" stroke="#6e6e6e" stroke-width="1.4"><circle cx="25.5" cy="4.5" r="2.4"/><circle cx="11.5" cy="11.5" r="2.4"/><circle cx="7.5" cy="25" r="2.4"/></g></svg>
<div class="t " style="left:1992.5px;top:880.8px;font-size:26.5px;letter-spacing:-0.06px;color:#111">Water Points</div>
<div class="a" style="left:2600px;top:877.8px;width:6px;height:32px;background:#ebebeb"></div>
<svg style="left:1947px;top:913.78px" width="34" height="32" viewBox="0 0 34 32"><g fill="#fff" stroke="#6e6e6e" stroke-width="1.4"><circle cx="25.5" cy="4.5" r="2.4"/><circle cx="11.5" cy="11.5" r="2.4"/><circle cx="7.5" cy="25" r="2.4"/></g></svg>
<div class="t " style="left:1992.5px;top:916.8px;font-size:26.5px;letter-spacing:0.233px;color:#111">Vegetation points [301]</div>
<div class="a" style="left:2600px;top:913.78px;width:6px;height:32px;background:#ebebeb"></div>
<svg style="left:1947px;top:949.76px" width="34" height="32" viewBox="0 0 34 32"><g fill="#fff" stroke="#6e6e6e" stroke-width="1.4"><circle cx="25.5" cy="4.5" r="2.4"/><circle cx="11.5" cy="11.5" r="2.4"/><circle cx="7.5" cy="25" r="2.4"/></g></svg>
<div class="t " style="left:1992.5px;top:952.8px;font-size:26.5px;letter-spacing:0.213px;color:#111">Points of Interest</div>
<div class="a" style="left:2600px;top:949.76px;width:6px;height:32px;background:#ebebeb"></div>
<svg style="left:1947px;top:985.74px" width="34" height="32" viewBox="0 0 34 32"><path d="M3 6.5L11.5 26.5L21.5 5L29 4" fill="none" stroke="#6e6e6e" stroke-width="1.5"/><g fill="#fff" stroke="#6e6e6e" stroke-width="1.3"><circle cx="3" cy="6" r="2"/><circle cx="11.5" cy="27" r="2"/><circle cx="21.5" cy="5" r="2"/><circle cx="29.5" cy="3.5" r="2"/></g></svg>
<div class="t " style="left:1992.5px;top:988.8px;font-size:26.5px;letter-spacing:-0.201px;color:#111">Water Lines</div>
<svg style="left:1918px;top:993.2px" width="10" height="17"><path d="M0.5 0.5V16L8.5 8.2Z" fill="#555"/></svg>
<div class="a" style="left:2600px;top:985.74px;width:6px;height:32px;background:#ebebeb"></div>
<svg style="left:1947px;top:1021.72px" width="34" height="32" viewBox="0 0 34 32"><path d="M3 6.5L11.5 26.5L21.5 5L29 4" fill="none" stroke="#6e6e6e" stroke-width="1.5"/><g fill="#fff" stroke="#6e6e6e" stroke-width="1.3"><circle cx="3" cy="6" r="2"/><circle cx="11.5" cy="27" r="2"/><circle cx="21.5" cy="5" r="2"/><circle cx="29.5" cy="3.5" r="2"/></g></svg>
<div class="t " style="left:1992.5px;top:1024.8px;font-size:26.5px;letter-spacing:0.071px;color:#111">Electricity Lines</div>
<div class="a" style="left:2600px;top:1021.72px;width:6px;height:32px;background:#ebebeb"></div>
<svg style="left:1947px;top:1057.6999999999998px" width="34" height="32" viewBox="0 0 34 32"><path d="M3 6.5L11.5 26.5L21.5 5L29 4" fill="none" stroke="#6e6e6e" stroke-width="1.5"/><g fill="#fff" stroke="#6e6e6e" stroke-width="1.3"><circle cx="3" cy="6" r="2"/><circle cx="11.5" cy="27" r="2"/><circle cx="21.5" cy="5" r="2"/><circle cx="29.5" cy="3.5" r="2"/></g></svg>
<div class="t " style="left:1992.5px;top:1060.7px;font-size:26.5px;letter-spacing:-0.433px;color:#111">Paths</div>
<div class="a" style="left:2600px;top:1057.6999999999998px;width:6px;height:32px;background:#ebebeb"></div>
<svg style="left:1947px;top:1095.6799999999998px" width="34" height="28" viewBox="0 0 34 28"><defs><linearGradient id="pgg" x1="0" y1="0" x2="0" y2="1"><stop offset="0" stop-color="#f4f4f4"/><stop offset="1" stop-color="#cdcdcd"/></linearGradient></defs><path d="M1.1 12.7C1.1 8 3.5 2.3 8 2.3C12 2.3 15.5 6 19.2 6C22.5 6 25 3.5 28.5 3.5C32 3.5 32.7 9 32.7 13.5C32.7 17 31.5 19 29 19C25.5 19 22 16.4 18 16.4C13.5 16.4 9 23.7 5.1 23.7C2.3 23.7 1.1 18 1.1 12.7Z" fill="url(#pgg)" stroke="#8a8a84" stroke-width="1.7"/></svg>
<div class="t " style="left:1992.5px;top:1096.7px;font-size:26.5px;letter-spacing:0.117px;color:#111">Buildings</div>
<div class="a" style="left:2600px;top:1093.6799999999998px;width:6px;height:32px;background:#ebebeb"></div>
<svg style="left:1947px;top:1131.6599999999999px" width="34" height="28" viewBox="0 0 34 28"><defs><linearGradient id="pgg" x1="0" y1="0" x2="0" y2="1"><stop offset="0" stop-color="#f4f4f4"/><stop offset="1" stop-color="#cdcdcd"/></linearGradient></defs><path d="M1.1 12.7C1.1 8 3.5 2.3 8 2.3C12 2.3 15.5 6 19.2 6C22.5 6 25 3.5 28.5 3.5C32 3.5 32.7 9 32.7 13.5C32.7 17 31.5 19 29 19C25.5 19 22 16.4 18 16.4C13.5 16.4 9 23.7 5.1 23.7C2.3 23.7 1.1 18 1.1 12.7Z" fill="url(#pgg)" stroke="#8a8a84" stroke-width="1.7"/></svg>
<div class="t " style="left:1992.5px;top:1132.7px;font-size:26.5px;letter-spacing:-0.056px;color:#111">Water Polygons</div>
<div class="a" style="left:2600px;top:1129.6599999999999px;width:6px;height:32px;background:#ebebeb"></div>
<svg style="left:1947px;top:1163.6399999999999px" width="34" height="36" viewBox="0 0 34 36"><g fill="none"><path d="M1 3.3H31" stroke="#333" stroke-width="1.4"/><path d="M1.8 13.3V33" stroke="#555" stroke-width="1.4"/><path d="M31 10.3V33.6" stroke="#6e6e6e" stroke-width="3.4"/><path d="M1 19.3H12.4M15.5 19.3H32.6" stroke="#222" stroke-width="1.8"/><path d="M1 32H12.5M21.6 32H32.7" stroke="#6e6e6e" stroke-width="3.4"/></g></svg>
<div class="t " style="left:1992.5px;top:1168.7px;font-size:26.5px;letter-spacing:0.268px;color:#111">Camps [20]</div>
<div class="a" style="left:2600px;top:1165.6399999999999px;width:6px;height:32px;background:#ebebeb"></div>
<svg style="left:1947px;top:1203.62px" width="34" height="28" viewBox="0 0 34 28"><defs><linearGradient id="pgg" x1="0" y1="0" x2="0" y2="1"><stop offset="0" stop-color="#f4f4f4"/><stop offset="1" stop-color="#cdcdcd"/></linearGradient></defs><path d="M1.1 12.7C1.1 8 3.5 2.3 8 2.3C12 2.3 15.5 6 19.2 6C22.5 6 25 3.5 28.5 3.5C32 3.5 32.7 9 32.7 13.5C32.7 17 31.5 19 29 19C25.5 19 22 16.4 18 16.4C13.5 16.4 9 23.7 5.1 23.7C2.3 23.7 1.1 18 1.1 12.7Z" fill="url(#pgg)" stroke="#8a8a84" stroke-width="1.7"/></svg>
<div class="t " style="left:1992.5px;top:1204.7px;font-size:26.5px;letter-spacing:-0.184px;color:#111">Clearing Plan</div>
<div class="a" style="left:2600px;top:1201.62px;width:6px;height:32px;background:#ebebeb"></div>
<svg style="left:1947px;top:1239.6px" width="34" height="28" viewBox="0 0 34 28"><defs><linearGradient id="pgg" x1="0" y1="0" x2="0" y2="1"><stop offset="0" stop-color="#f4f4f4"/><stop offset="1" stop-color="#cdcdcd"/></linearGradient></defs><path d="M1.1 12.7C1.1 8 3.5 2.3 8 2.3C12 2.3 15.5 6 19.2 6C22.5 6 25 3.5 28.5 3.5C32 3.5 32.7 9 32.7 13.5C32.7 17 31.5 19 29 19C25.5 19 22 16.4 18 16.4C13.5 16.4 9 23.7 5.1 23.7C2.3 23.7 1.1 18 1.1 12.7Z" fill="url(#pgg)" stroke="#8a8a84" stroke-width="1.7"/></svg>
<div class="t " style="left:1992.5px;top:1240.6px;font-size:26.5px;letter-spacing:0.165px;color:#111">Area Of Interest</div>
<div class="a" style="left:2600px;top:1237.6px;width:6px;height:32px;background:#ebebeb"></div>
<svg style="left:1947px;top:1272.58px" width="34" height="34" viewBox="0 0 34 34"><g fill="#f1f1ef" stroke="#8a8a84" stroke-width="1.5"><path d="M3.3 20.9V30.7H15.5" fill="none"/><path d="M13.1 6H28.7V23.1H13.1Z"/><path d="M7.2 9.9H24.7V27H7.2Z"/></g><path d="M15.8 12V5.4A2.3 2.3 0 0 1 20.4 5.4V20.2A2.3 2.3 0 0 1 15.8 20.2V12" fill="none" stroke="#3a5f8f" stroke-width="1.6"/></svg>
<div class="t " style="left:1992.5px;top:1276.6px;font-size:26.5px;letter-spacing:-0.141px;color:#111">Lookup Tables</div>
<svg style="left:1918px;top:1281.1px" width="10" height="17"><path d="M0.5 0.5V16L8.5 8.2Z" fill="#555"/></svg>
<div class="a" style="left:2600px;top:1273.58px;width:6px;height:32px;background:#ebebeb"></div>
<svg style="left:1952px;top:1313.96px" width="26" height="26" viewBox="0 0 26 26"><rect x="0.0" y="0.0" width="8.7" height="8.7" fill="#2b3d54"/><rect x="8.6" y="0.0" width="8.7" height="8.7" fill="#a9c6e6"/><rect x="17.2" y="0.0" width="8.7" height="8.7" fill="#2b3d54"/><rect x="0.0" y="8.6" width="8.7" height="8.7" fill="#a9c6e6"/><rect x="8.6" y="8.6" width="8.7" height="8.7" fill="#2b3d54"/><rect x="17.2" y="8.6" width="8.7" height="8.7" fill="#a9c6e6"/><rect x="0.0" y="17.2" width="8.7" height="8.7" fill="#2b3d54"/><rect x="8.6" y="17.2" width="8.7" height="8.7" fill="#a9c6e6"/><rect x="17.2" y="17.2" width="8.7" height="8.7" fill="#ffffff"/></svg>
<div class="t " style="left:1992.5px;top:1312.6px;font-size:26.5px;letter-spacing:-0.043px;color:#111">Google Satellite</div>
<div class="a" style="left:2600px;top:1309.56px;width:6px;height:32px;background:#ebebeb"></div>
<div class="a" style="left:1901px;top:1387.5px;width:54px;height:51px;background:linear-gradient(#f3f3f3,#e9e9e9);border:1.5px solid #cdcdcd;border-radius:5px"></div>
<div class="a" style="left:1963px;top:1387.5px;width:54px;height:51px;background:linear-gradient(#f3f3f3,#e9e9e9);border:1.5px solid #cdcdcd;border-radius:5px"></div>
<div class="a" style="left:2025px;top:1387.5px;width:54px;height:51px;background:linear-gradient(#f3f3f3,#e9e9e9);border:1.5px solid #cdcdcd;border-radius:5px"></div>
<div class="a" style="left:2087px;top:1387.5px;width:54px;height:51px;background:linear-gradient(#f3f3f3,#e9e9e9);border:1.5px solid #cdcdcd;border-radius:5px"></div>
<div class="a" style="left:2149px;top:1387.5px;width:54px;height:51px;background:linear-gradient(#f3f3f3,#e9e9e9);border:1.5px solid #cdcdcd;border-radius:5px"></div>
<div class="a" style="left:2211px;top:1387.5px;width:54px;height:51px;background:linear-gradient(#f3f3f3,#e9e9e9);border:1.5px solid #cdcdcd;border-radius:5px"></div>
<div class="a" style="left:2273px;top:1387.5px;width:54px;height:51px;background:linear-gradient(#f3f3f3,#e9e9e9);border:1.5px solid #cdcdcd;border-radius:5px"></div>
<div class="a" style="left:2335px;top:1387.5px;width:54px;height:51px;background:linear-gradient(#d9d9d9,#dedede);border:1.5px solid #b6b6b6;border-radius:5px"></div>
<div class="a" style="left:2396.5px;top:1387.5px;width:55px;height:51px;background:linear-gradient(#f3f3f3,#e9e9e9);border:1.5px solid #cdcdcd;border-radius:5px;border-radius:5px 0 0 5px"></div>
<div class="a" style="left:2482.5px;top:1387.5px;width:54px;height:51px;background:linear-gradient(#f3f3f3,#e9e9e9);border:1.5px solid #cdcdcd;border-radius:5px"></div>
<div class="a" style="left:2452.5px;top:1387.5px;width:23px;height:51px;background:linear-gradient(#f3f3f3,#e9e9e9);border:1.5px solid #cdcdcd;border-radius:0 5px 5px 0"></div>
<svg style="left:0;top:0" width="2694" height="1688" viewBox="0 0 2694 1688">
<path d="M1911.3 1398.4H1944.7L1928 1424.2Z" fill="#d6d9dc" stroke="#c6c9cc" stroke-width="1.4" stroke-linejoin="round"/>
<path d="M1973.4 1424.2H2006.8L1990.1 1398.4Z" fill="#d6d9dc" stroke="#c6c9cc" stroke-width="1.4" stroke-linejoin="round"/>
<g fill="#ececec" stroke="#d0d0d0" stroke-width="1.5"><path d="M2035.5 1411V1430.5H2054"/><path d="M2040 1403.5H2058V1424.5H2040Z"/><path d="M2045.5 1397.5H2064.5V1419H2045.5Z" fill="#f2f2f2"/></g><path d="M2051.5 1410V1397A3 3 0 0 1 2057.5 1397V1413A1.8 1.8 0 0 1 2054 1413V1402" fill="none" stroke="#c8ccd2" stroke-width="1.6"/><rect x="2054.5" y="1417.5" width="15" height="14" rx="3" fill="#d5d8d5"/><path d="M2062 1420V1429M2057.5 1424.5H2066.5" stroke="#f6f6f6" stroke-width="3"/>
<path d="M2108.5 1395.5H2119.5V1406.5H2130.5V1417.5H2119.5V1428.5H2108.5V1417.5H2097.5V1406.5H2108.5Z" fill="#dfe3df" stroke="#cbd1cb" stroke-width="1.5"/><path d="M2111.5 1398.5H2116.5V1409.5H2127.5V1414.5H2116.5V1425.5H2111.5V1414.5H2100.5V1409.5H2111.5Z" fill="none" stroke="#eef1ee" stroke-width="1.2"/>
<rect x="2159.5" y="1405.2" width="33.5" height="13.4" fill="#e8dfdf" stroke="#dccfcf" stroke-width="1.5"/><rect x="2162.5" y="1408.2" width="27.5" height="7.4" fill="none" stroke="#f3ecec" stroke-width="1.2"/>
<path d="M2221.5 1393.5H2240L2249 1402.5V1431H2221.5Z" fill="#f0f0f0" stroke="#dadada" stroke-width="1.4"/><path d="M2249.5 1396L2255.5 1399L2238 1426.5L2231 1430L2231.5 1422Z" fill="#e3e3dc" stroke="#cfcfc8" stroke-width="1.3" stroke-linejoin="round"/>
<text x="2299.8" y="1428" text-anchor="middle" font-family="Liberation Serif, serif" font-size="44" fill="#cbbfcd">Σ</text>
<path d="M2345.8 1399.8H2377.8L2365.4 1414.6V1431L2358.2 1427.6V1414.6Z" fill="#5d8fcb" stroke="#2b4f7d" stroke-width="1.5" stroke-linejoin="round"/><path d="M2345.4 1394H2378.2V1399.8H2345.4Z" fill="#f4e63c" stroke="#35679e" stroke-width="1.3"/><path d="M2349 1402L2359.5 1414.6V1426" fill="none" stroke="#8ab2e0" stroke-width="1.4"/>
<text x="2419.5" y="1418" text-anchor="middle" font-family="Liberation Serif, serif" font-size="40" fill="#d2d2d2">ε</text><path d="M2425.5 1414H2444L2443 1430.5H2437L2436 1421.5H2433L2432 1430.5H2426.5Z" fill="#dedede"/>
<path d="M2456.3 1409.2H2471.8L2464 1417.4Z" fill="#444"/>
<text x="2507.5" y="1428.4" text-anchor="middle" font-family="Liberation Serif, serif" font-weight="bold" font-size="74" fill="#5a2a6a">ε</text>
<g transform="translate(2509,1415.3)" ><rect x="0" y="0" width="18" height="18" rx="3.6" fill="#578c55"/><rect x="1.3" y="1.3" width="15.4" height="8.0" rx="2.6" fill="#86ad84" opacity="0.8"/><path d="M9.0 3.2V14.8M3.2 9.0H14.8" stroke="#fff" stroke-width="4"/></g>
</svg>
<div class="a" style="left:1900.5px;top:1460.5px;width:27px;height:27px;background:#fff;border:1.5px solid #c2c2c2;border-radius:3px"></div>
<div class="t " style="left:1939px;top:1461.5px;font-size:26.5px;letter-spacing:0.149px;color:#222">Only show items inside current atlas feature</div>
<svg style="left:1882px;top:1543.5px" width="14" height="21"><path d="M0 0V21L14 10.5Z" fill="#2c2c2c" stroke="#2a2a2a" stroke-width="1" stroke-linejoin="round"/></svg>
<div class="t b" style="left:1915.5px;top:1541.0px;font-size:26.5px;letter-spacing:0.095px;color:#111">Fonts and Text Formatting</div>
<svg style="left:1882px;top:1599.5px" width="14" height="21"><path d="M0 0V21L14 10.5Z" fill="#2c2c2c" stroke="#2a2a2a" stroke-width="1" stroke-linejoin="round"/></svg>
<div class="t b" style="left:1915.5px;top:1597.0px;font-size:26.5px;letter-spacing:-0.425px;color:#111">Columns</div>
<svg style="left:1840px;top:900px" width="6" height="40"><g fill="#b8b8b8"><rect x="2" y="2" width="1.6" height="1.6"/><rect x="2" y="7" width="1.6" height="1.6"/><rect x="2" y="12" width="1.6" height="1.6"/><rect x="2" y="17" width="1.6" height="1.6"/><rect x="2" y="22" width="1.6" height="1.6"/><rect x="2" y="27" width="1.6" height="1.6"/><rect x="2" y="32" width="1.6" height="1.6"/></g></svg>
<div class="t " style="left:14px;top:1647.0px;font-size:26.5px;letter-spacing:0.018px;color:#222">1 item selected</div>
<div class="t " style="left:1540.5px;top:1647.5px;font-size:26.5px;letter-spacing:-0.191px;color:#222">x: 261.779 mm</div>
<div class="t " style="left:1753px;top:1647.5px;font-size:26.5px;letter-spacing:0.072px;color:#222">y: 49.5 mm</div>
<div class="t " style="left:1964.5px;top:1647.5px;font-size:26.5px;letter-spacing:-0.346px;color:#222">page: 1</div>
<div class="a" style="left:2177px;top:1637px;width:252px;height:46px;background:#fff;border:2px solid #adadad;border-radius:6px;overflow:hidden;box-shadow:inset 0 1px 2px rgba(0,0,0,0.12)"><div class="a" style="left:210px;top:0;width:42px;height:46px;background:linear-gradient(#fbfbfb,#e9e9e9);border-left:1px solid #d2d2d2"></div></div>
<div class="t " style="left:2185px;top:1646.5px;font-size:26.5px;letter-spacing:-0.898px;color:#111">185.3%</div>
<svg style="left:2398px;top:1655px" width="18" height="10"><path d="M0.5 0.5H17L8.8 9.5Z" fill="#3a3a3a"/></svg>
<div class="a" style="left:2444.5px;top:1654px;width:195px;height:9px;background:#d0d0d0;border:1px solid #bcbcbc;border-radius:4.5px"></div>
<div class="a" style="left:2444.5px;top:1654px;width:42px;height:9px;background:#3d8df2;border:1px solid #2f78d8;border-radius:4.5px 0 0 4.5px"></div>
<div class="a" style="left:2481px;top:1646.5px;width:24px;height:24px;background:linear-gradient(#fff,#f0f0f0);border:1.5px solid #bdbdbd;border-radius:5px;box-shadow:0 1px 1px rgba(0,0,0,0.12)"></div>
<svg style="left:2664px;top:1664px" width="22" height="22"><g fill="#bdbdbd"><rect x="18" y="18" width="1.8" height="1.8"/><rect x="14" y="18" width="1.8" height="1.8"/><rect x="10" y="18" width="1.8" height="1.8"/><rect x="6" y="18" width="1.8" height="1.8"/><rect x="2" y="18" width="1.8" height="1.8"/><rect x="18" y="14" width="1.8" height="1.8"/><rect x="14" y="14" width="1.8" height="1.8"/><rect x="10" y="14" width="1.8" height="1.8"/><rect x="6" y="14" width="1.8" height="1.8"/><rect x="18" y="10" width="1.8" height="1.8"/><rect x="14" y="10" width="1.8" height="1.8"/><rect x="10" y="10" width="1.8" height="1.8"/><rect x="18" y="6" width="1.8" height="1.8"/><rect x="14" y="6" width="1.8" height="1.8"/><rect x="18" y="2" width="1.8" height="1.8"/></g></svg><svg style="left:0;top:0" width="2694" height="1688" viewBox="0 0 2694 1688">
<text x="1143" y="449.7" font-family="Liberation Sans, sans-serif" font-size="35" fill="#111" textLength="197" lengthAdjust="spacingAndGlyphs" stroke="#111" stroke-width="0.9">Water Lines</text>
<text x="1143.5" y="514.5" font-family="Liberation Sans, sans-serif" font-size="42" fill="#111" textLength="92" lengthAdjust="spacingAndGlyphs" stroke="#111" stroke-width="0.9">River</text>
<text x="1144.5" y="582" font-family="Liberation Sans, sans-serif" font-size="42" fill="#111" textLength="234" lengthAdjust="spacingAndGlyphs" stroke="#111" stroke-width="0.9">Irrigation line</text>
<text x="1144" y="649.4" font-family="Liberation Sans, sans-serif" font-size="42" fill="#111" textLength="218.5" lengthAdjust="spacingAndGlyphs" stroke="#111" stroke-width="0.9">Camps [20]</text>
<rect x="1396.2" y="492" width="85.5" height="11" fill="#2eaccf"/>
<rect x="1396.2" y="560.3" width="55.6" height="10.6" fill="#3ab9d8"/><rect x="1463.2" y="560.3" width="18.5" height="10.6" fill="#3ab9d8"/>
<g fill="none" stroke="#262626" stroke-linejoin="round"><path d="M1400.5 617V612.4H1456.3" stroke-width="4.6"/><path d="M1474.3 612.4V653.4H1457.5" stroke-width="4.6"/><path d="M1401.6 634.5V653.4H1440" stroke-width="4.6"/><path d="M1402 634.6H1474" stroke-width="1.6" stroke-dasharray="8 3"/></g>
<rect x="1122.5" y="356.5" width="374" height="320" fill="none" stroke="#56a4dc" stroke-width="1.2"/>
<rect x="1122.5" y="356.5" width="374" height="320" fill="none" stroke="#7a1f4e" stroke-width="1.2" stroke-dasharray="3 3"/>
<rect x="1122.5" y="356.5" width="20" height="20" fill="#fff" stroke="#4a92d2" stroke-width="1.4"/>
<rect x="1122.5" y="506.6" width="20" height="20" fill="#fff" stroke="#4a92d2" stroke-width="1.4"/>
<rect x="1122.5" y="656.5" width="20" height="20" fill="#fff" stroke="#4a92d2" stroke-width="1.4"/>
<rect x="1299.8" y="356.5" width="20" height="20" fill="#fff" stroke="#4a92d2" stroke-width="1.4"/>
<rect x="1299.8" y="656.5" width="20" height="20" fill="#fff" stroke="#4a92d2" stroke-width="1.4"/>
<rect x="1476.5" y="356.5" width="20" height="20" fill="#fff" stroke="#4a92d2" stroke-width="1.4"/>
<rect x="1476.5" y="506.6" width="20" height="20" fill="#fff" stroke="#4a92d2" stroke-width="1.4"/>
<rect x="1476.5" y="656.5" width="20" height="20" fill="#fff" stroke="#4a92d2" stroke-width="1.4"/>
<path d="M1894 610.6L1527 524.3" stroke="#e8412a" stroke-width="5.2" fill="none"/>
<path d="M1505.5 518L1531.5 510L1526 535.2Z" fill="#e8412a"/>
</svg>
</body></html>
